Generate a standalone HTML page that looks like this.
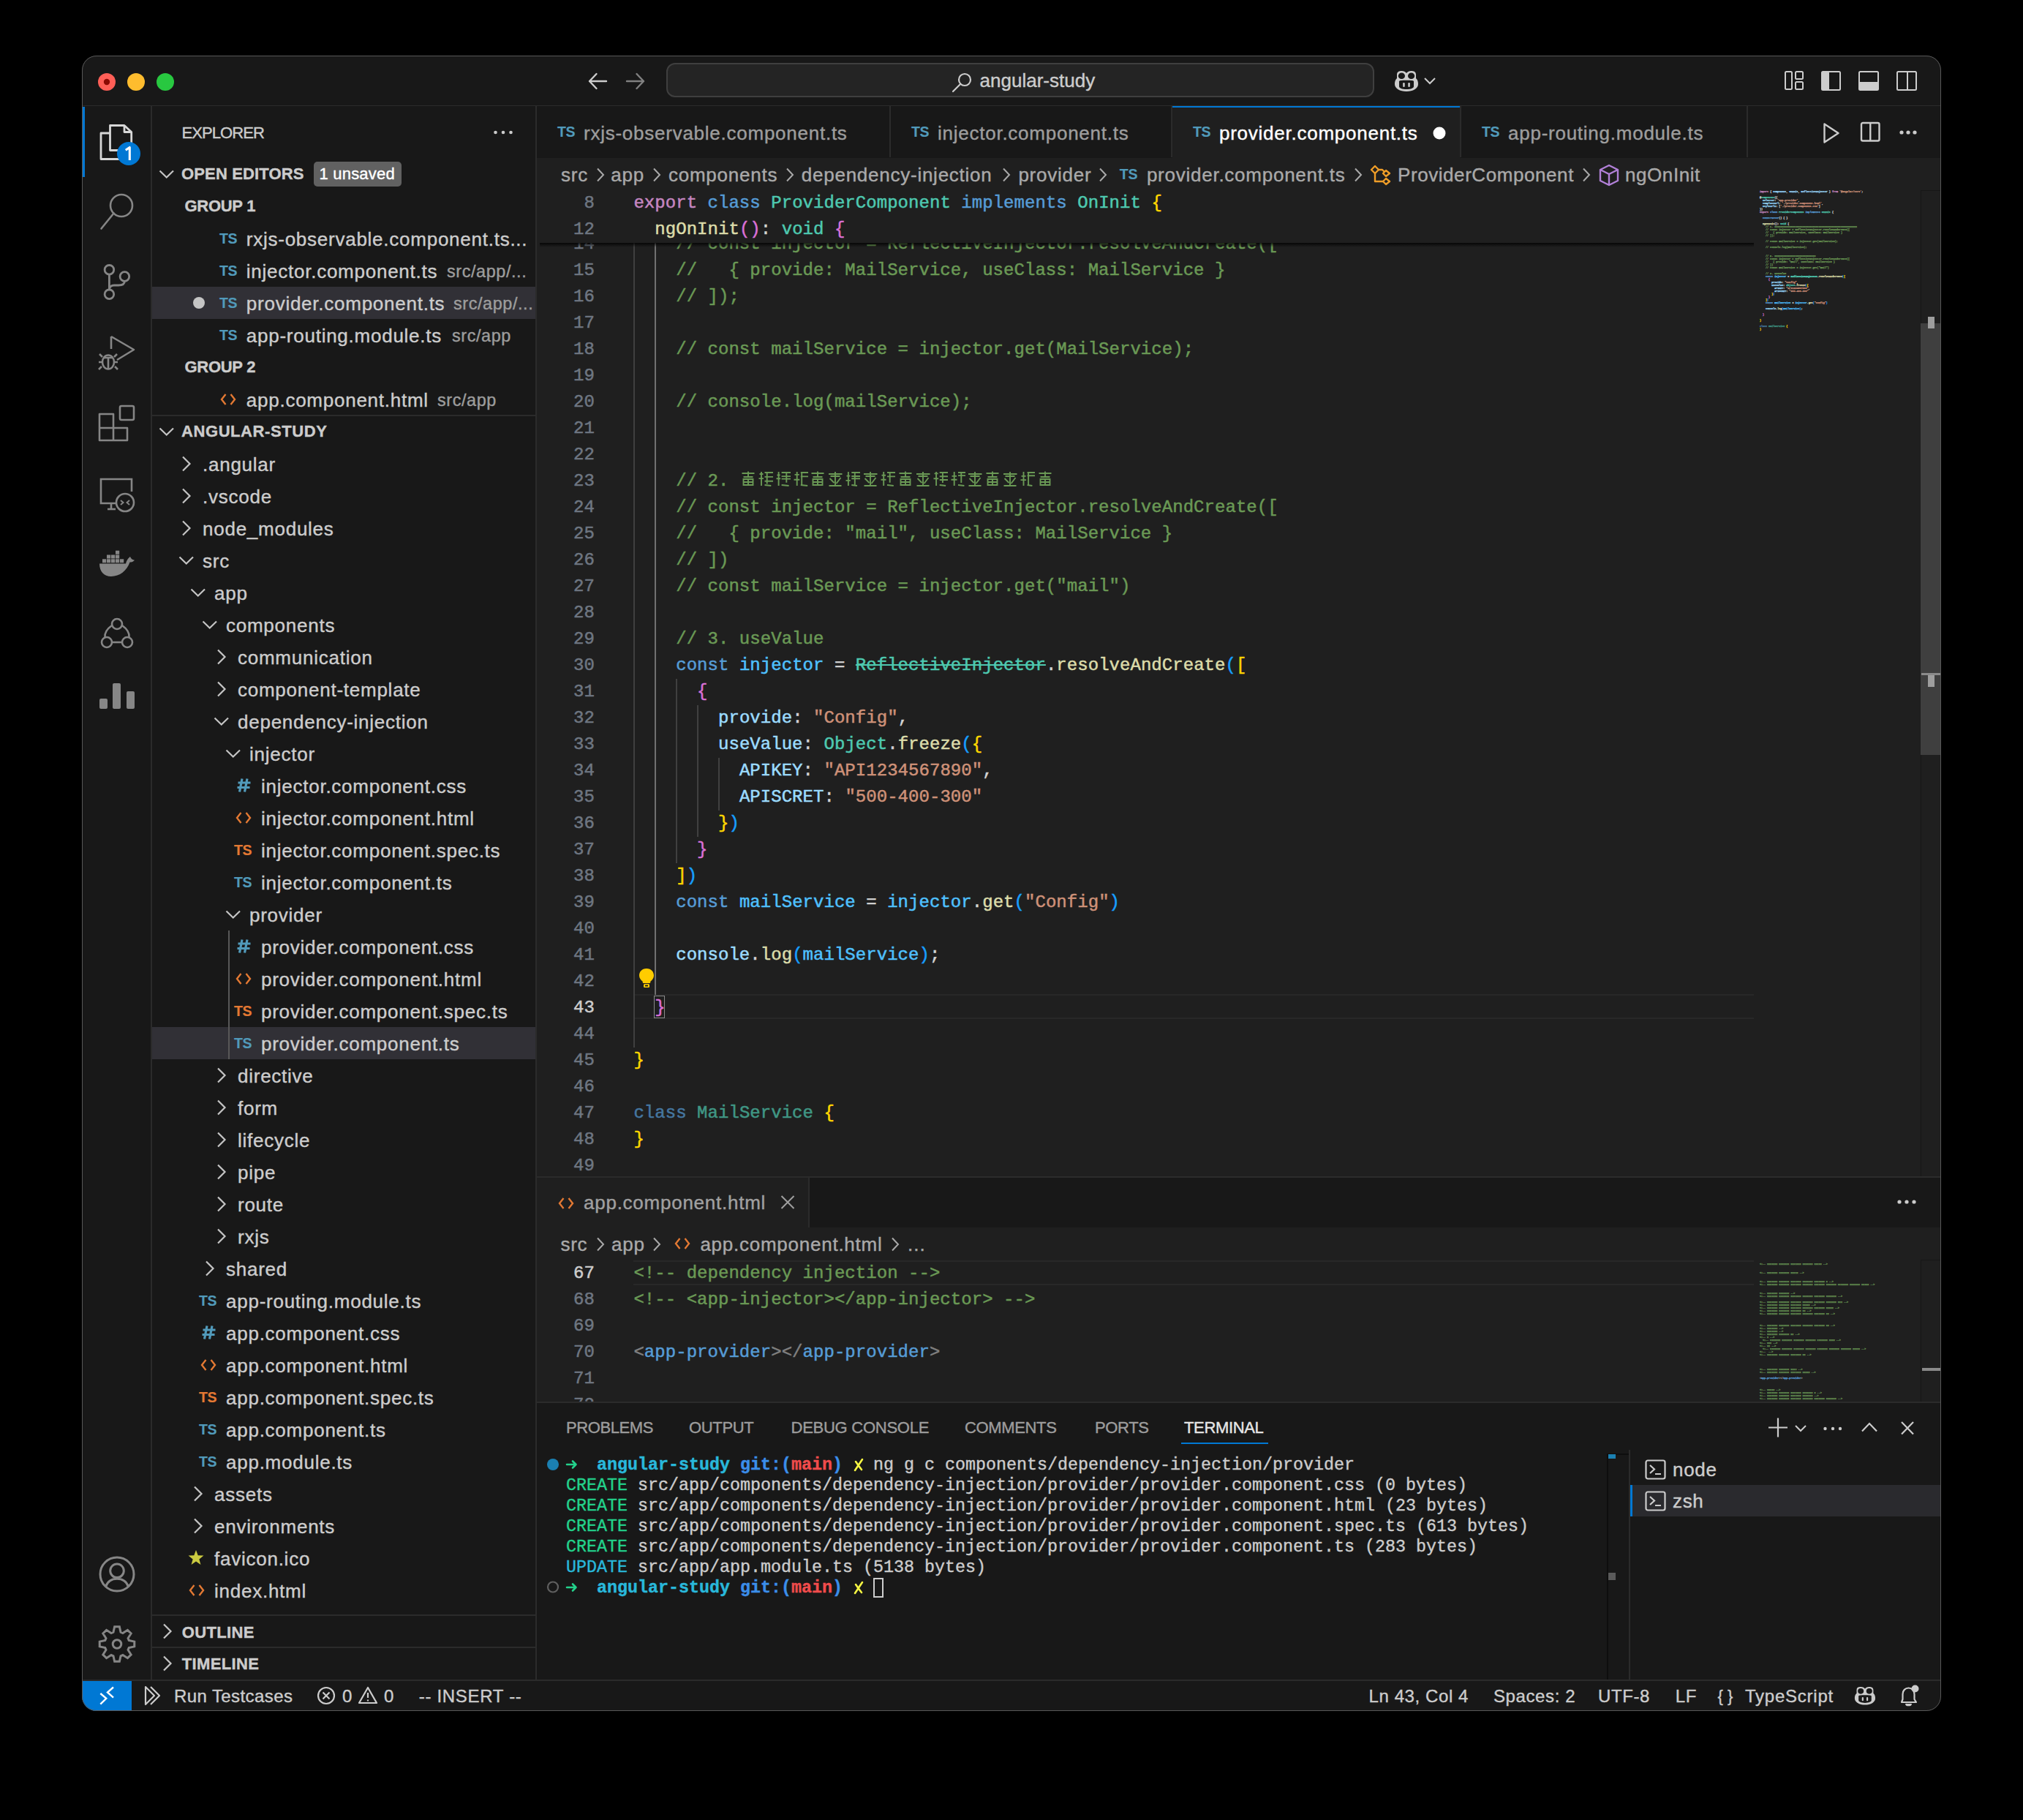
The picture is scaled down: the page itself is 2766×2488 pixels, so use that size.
<!DOCTYPE html><html><head><meta charset="utf-8"><style>
html,body{margin:0;padding:0;background:#000;width:2766px;height:2488px;overflow:hidden;}
.t{position:absolute;white-space:pre;-webkit-text-stroke:0.4px currentColor;}
.r{position:absolute;}
.s{position:absolute;overflow:visible;}
#win{position:absolute;left:112px;top:76px;width:2542px;height:2263px;border-radius:20px;overflow:hidden;background:#181818;}
#inner{position:absolute;left:-112px;top:-76px;width:2766px;height:2488px;}
#frame{position:absolute;left:112px;top:76px;width:2540px;height:2261px;border:1px solid #585858;border-radius:20px;pointer-events:none;}
.code{font-family:"Liberation Mono", monospace;font-size:24px;line-height:36px;-webkit-text-stroke:0.5px currentColor;letter-spacing:0.045px;}
</style></head><body>
<div id="win"><div id="inner">

<div class="r" style="left:112px;top:76px;width:2542px;height:69px;background:#181818;"></div>
<div class="r" style="left:112px;top:144px;width:2542px;height:2px;background:#2b2b2b;"></div>
<svg class="s" style="left:130px;top:96px;" width="112" height="32" viewBox="0 0 112 32"><circle cx="16" cy="16" r="12" fill="#ff5f57"/><circle cx="16" cy="16" r="4.2" fill="#8c0a04"/><circle cx="56" cy="16" r="12" fill="#febc2e"/><circle cx="96" cy="16" r="12" fill="#28c840"/></svg>
<svg class="s" style="left:800px;top:96px;" width="90" height="30" viewBox="0 0 90 30"><path d="M29 15 H6 M15.5 5 L6 15 L15.5 25" stroke="#cccccc" stroke-width="2.4" fill="none" stroke-linecap="round" stroke-linejoin="round"/><path d="M57 15 H80 M70.5 5 L80 15 L70.5 25" stroke="#808080" stroke-width="2.4" fill="none" stroke-linecap="round" stroke-linejoin="round"/></svg>
<div class="r" style="left:911px;top:86px;width:968px;height:47px;background:#242424;border:2px solid #3f3f3f;box-sizing:border-box;border-radius:12px;"></div>
<svg class="s" style="left:1300px;top:98px;" width="32" height="32" viewBox="0 0 32 32"><circle cx="19" cy="11" r="8" stroke="#cccccc" stroke-width="2.2" fill="none"/><path d="M13.3 16.7 L3 27" stroke="#cccccc" stroke-width="2.2" stroke-linecap="round"/></svg>
<div class="t" style="left:1339.6px;top:97.0px;font-size:26px;line-height:26px;color:#cccccc;font-family:'Liberation Sans', sans-serif;font-weight:normal;letter-spacing:0px;">angular-study</div>
<svg class="s" style="left:1906px;top:95.5px;" width="36" height="32" viewBox="0 0 36 32"><g transform="scale(1.0)"><path d="M4 6 C4 2 7 1 10.5 1 C14 1 16 2.5 17 4 C18 2.5 20 1 23.5 1 C27 1 30 2 30 6 L30 11 C32.5 13 33 16 33 19 C33 25 26 29 17 29 C8 29 1 25 1 19 C1 16 1.5 13 4 11 Z" fill="#cccccc"/><ellipse cx="10.4" cy="7.8" rx="4.6" ry="4.3" fill="#181818"/><ellipse cx="23.6" cy="7.8" rx="4.6" ry="4.3" fill="#181818"/><path d="M7 15.5 C7 14 10 13.8 17 13.8 C24 13.8 27 14 27 15.5 L27 22 C27 24.5 23 26 17 26 C11 26 7 24.5 7 22 Z" fill="#181818"/><rect x="12.2" y="17" width="2.5" height="6" rx="1.25" fill="#cccccc"/><rect x="19.3" y="17" width="2.5" height="6" rx="1.25" fill="#cccccc"/></g></svg>
<svg class="s" style="left:1946px;top:104px;" width="20" height="14" viewBox="0 0 20 14"><path d="M2 3 L9 10 L16 3" stroke="#cccccc" stroke-width="2" fill="none"/></svg>
<svg class="s" style="left:2438px;top:95px;" width="190" height="32" viewBox="0 0 190 32"><g stroke="#cccccc" stroke-width="2" fill="none"><rect x="3" y="3" width="9" height="24" rx="1.5"/><rect x="17" y="3" width="10" height="10" rx="1.5"/><rect x="17" y="17" width="10" height="10" rx="1.5"/><rect x="53" y="3" width="25" height="25" rx="1.5"/><rect x="104" y="3" width="26" height="25" rx="1.5"/><rect x="156" y="3" width="26" height="25" rx="1.5"/></g><rect x="53" y="3" width="10" height="25" fill="#cccccc"/><rect x="104" y="17" width="26" height="11" fill="#cccccc"/><path d="M170 3 V28" stroke="#cccccc" stroke-width="2"/></svg>
<div class="r" style="left:112px;top:145px;width:95px;height:2152px;background:#181818;"></div>
<div class="r" style="left:206px;top:145px;width:2px;height:2152px;background:#2b2b2b;"></div>
<div class="r" style="left:112px;top:146px;width:4px;height:96px;background:#0078d4;"></div>
<svg class="s" style="left:130px;top:164px;" width="60" height="64" viewBox="0 0 60 64"><g stroke="#d7d7d7" stroke-width="2.8" fill="none" stroke-linejoin="round"><path d="M20.5 7.5 H40 L49.7 16.5 V41.5 H20.5 Z"/><path d="M40 7.5 V16.5 H49.7"/><path d="M20.5 18 H8 V53.5 H33"/></g><circle cx="46" cy="46" r="16" fill="#0078d4"/><path d="M41.8 41.2 L47.3 37.5 V55" stroke="#ffffff" stroke-width="3.1" fill="none" stroke-linejoin="round"/></svg>
<svg class="s" style="left:134px;top:262px;" width="54" height="54" viewBox="0 0 54 54"><circle cx="32" cy="19" r="15" stroke="#868686" stroke-width="2.6" fill="none"/><path d="M21.5 29.5 L4.5 50.5" stroke="#868686" stroke-width="2.6" stroke-linecap="round"/></svg>
<svg class="s" style="left:134px;top:360px;" width="54" height="54" viewBox="0 0 54 54"><g stroke="#868686" stroke-width="2.8" fill="none"><circle cx="15.4" cy="8.8" r="6.3"/><circle cx="15.4" cy="42.3" r="6.3"/><circle cx="36.4" cy="18" r="6.3"/><path d="M15.4 15.1 V36"/><path d="M15.4 35.5 C16 31.5 18 30 22 30 H28 C33 30 36.4 28 36.4 24.3"/></g></svg>
<svg class="s" style="left:132px;top:455px;" width="56" height="56" viewBox="0 0 56 56"><g stroke="#868686" stroke-width="2.6" fill="none" stroke-linejoin="round"><path d="M20 5 L51 23 L28 37"/><path d="M20 5 V22"/><ellipse cx="16" cy="40" rx="8" ry="9.5"/><path d="M9.5 34 H22.5 M8 40 H3 M29 40 H24 M7 46 L3 50 M25 46 L29 50 M8 33 L4 29 M24 33 L28 29 M16 34 V49"/></g></svg>
<svg class="s" style="left:132px;top:552px;" width="56" height="56" viewBox="0 0 56 56"><g stroke="#868686" stroke-width="2.6" fill="none" stroke-linejoin="round"><rect x="32" y="3" width="19" height="19" rx="2"/><path d="M4 14 H23 V33 H42 V50 H4 Z"/><path d="M4 33 H23 V50"/></g></svg>
<svg class="s" style="left:132px;top:650px;" width="56" height="56" viewBox="0 0 56 56"><g stroke="#868686" stroke-width="2.6" fill="none"><path d="M26 38 H6 V5 H48 V22"/><path d="M15 46 H26"/><path d="M20 38 V46"/><circle cx="39" cy="37" r="12"/></g><path d="M33 34 L36.5 37 L33 40 M45 34 L41.5 37 L45 40" stroke="#868686" stroke-width="2" fill="none"/></svg>
<svg class="s" style="left:130px;top:745px;" width="60" height="50" viewBox="0 0 60 50"><g fill="#868686"><path d="M6 25.5 H42 C43 21 45.5 18 48 16 C49.5 19 50.5 20 54 20.8 C52.5 22.8 50 23.6 47.5 23.6 C43.5 35.5 33.5 43 22 43 C12 43 6 36 6 25.5 Z"/><rect x="10" y="19.3" width="5.2" height="5"/><rect x="16" y="19.3" width="5.2" height="5"/><rect x="22" y="19.3" width="5.2" height="5"/><rect x="28" y="19.3" width="5.2" height="5"/><rect x="34" y="19.3" width="5.2" height="5"/><rect x="16" y="13.5" width="5.2" height="5"/><rect x="22" y="13.5" width="5.2" height="5"/><rect x="28" y="13.5" width="5.2" height="5"/><rect x="28" y="7.7" width="5.2" height="5"/></g></svg>
<svg class="s" style="left:132px;top:838px;" width="56" height="56" viewBox="0 0 56 56"><g stroke="#868686" stroke-width="2.6" fill="none"><circle cx="28" cy="15" r="7"/><circle cx="14" cy="40" r="7"/><circle cx="42" cy="40" r="7"/><path d="M21 40 H35"/><path d="M21 17 C14 22 11 28 11.5 33"/><path d="M35 17 C42 22 45 28 44.5 33"/></g></svg>
<svg class="s" style="left:132px;top:930px;" width="56" height="42" viewBox="0 0 56 42"><g fill="#868686"><rect x="4" y="25" width="11" height="14" rx="2"/><rect x="22" y="4" width="11" height="35" rx="2"/><rect x="41" y="15" width="11" height="24" rx="2"/></g></svg>
<svg class="s" style="left:132px;top:2125px;" width="56" height="56" viewBox="0 0 56 56"><g stroke="#868686" stroke-width="3" fill="none"><circle cx="28" cy="27" r="23"/><circle cx="28" cy="22.3" r="9.3"/><path d="M12.5 44 C15 37 21 33.2 28 33.2 C35 33.2 41 37 43.5 44"/></g></svg>
<svg class="s" style="left:132px;top:2220px;" width="56" height="56" viewBox="0 0 56 56"><polygon points="22.98,11.26 24.65,3.73 31.35,3.73 33.02,11.26 35.93,12.46 42.44,8.33 47.17,13.06 43.04,19.57 44.24,22.48 51.77,24.15 51.77,30.85 44.24,32.52 43.04,35.43 47.17,41.94 42.44,46.67 35.93,42.54 33.02,43.74 31.35,51.27 24.65,51.27 22.98,43.74 20.07,42.54 13.56,46.67 8.83,41.94 12.96,35.43 11.76,32.52 4.23,30.85 4.23,24.15 11.76,22.48 12.96,19.57 8.83,13.06 13.56,8.33 20.07,12.46" stroke="#868686" stroke-width="3" fill="none" stroke-linejoin="miter"/><circle cx="28" cy="27.5" r="5.8" stroke="#868686" stroke-width="3" fill="none"/></svg>
<div class="r" style="left:208px;top:145px;width:524px;height:2152px;background:#181818;"></div>
<div class="r" style="left:732px;top:145px;width:2px;height:2152px;background:#2b2b2b;"></div>
<div class="t" style="left:248.4px;top:170.8px;font-size:22px;line-height:22px;color:#cccccc;font-family:'Liberation Sans', sans-serif;font-weight:normal;letter-spacing:-0.9px;">EXPLORER</div>
<svg class="s" style="left:674px;top:177px;" width="30" height="8" viewBox="0 0 30 8"><circle cx="3.5" cy="4" r="2.3" fill="#cccccc"/><circle cx="14" cy="4" r="2.3" fill="#cccccc"/><circle cx="24.5" cy="4" r="2.3" fill="#cccccc"/></svg>
<svg class="s" style="left:217px;top:231px;" width="22" height="14" viewBox="0 0 22 14"><path d="M1.5 2.5 L10.75 11.5 L20 2.5" stroke="#c5c5c5" stroke-width="2.2" fill="none"/></svg>
<div class="t" style="left:248.0px;top:227.1px;font-size:22px;line-height:22px;color:#cccccc;font-family:'Liberation Sans', sans-serif;font-weight:bold;letter-spacing:0.15px;">OPEN EDITORS</div>
<div class="r" style="left:429px;top:221px;width:120px;height:34px;background:#616161;border-radius:5px;"></div>
<div class="t" style="left:436.5px;top:226.9px;font-size:22px;line-height:22px;color:#ffffff;font-family:'Liberation Sans', sans-serif;font-weight:normal;letter-spacing:0.21px;">1 unsaved</div>
<div class="t" style="left:252.5px;top:271.4px;font-size:22px;line-height:22px;color:#cccccc;font-family:'Liberation Sans', sans-serif;font-weight:bold;letter-spacing:-0.29px;">GROUP 1</div>
<div class="r" style="left:208px;top:392px;width:524px;height:44px;background:#313036;"></div>
<svg class="s" style="left:262px;top:404px;" width="20" height="20" viewBox="0 0 20 20"><circle cx="10" cy="10" r="8" fill="#c5c5c5"/></svg>
<div class="t" style="left:300.0px;top:316.5px;font-size:19.5px;line-height:19.5px;color:#519aba;font-family:'Liberation Sans', sans-serif;font-weight:bold;letter-spacing:-0.3px;-webkit-text-stroke:0.15px currentColor;">TS</div>
<div class="t" style="left:336.8px;top:314.0px;font-size:26px;line-height:26px;color:#cccccc;font-family:'Liberation Sans', sans-serif;font-weight:normal;letter-spacing:0.75px;">rxjs-observable.component.ts...</div>
<div class="t" style="left:300.0px;top:360.5px;font-size:19.5px;line-height:19.5px;color:#519aba;font-family:'Liberation Sans', sans-serif;font-weight:bold;letter-spacing:-0.3px;-webkit-text-stroke:0.15px currentColor;">TS</div>
<div class="t" style="left:336.8px;top:358.0px;font-size:26px;line-height:26px;color:#cccccc;font-family:'Liberation Sans', sans-serif;font-weight:normal;letter-spacing:0.75px;">injector.component.ts</div>
<div class="t" style="left:611.0px;top:360.2px;font-size:23.4px;line-height:23.4px;color:#9d9d9d;font-family:'Liberation Sans', sans-serif;font-weight:normal;letter-spacing:0.6px;">src/app/...</div>
<div class="t" style="left:300.0px;top:404.5px;font-size:19.5px;line-height:19.5px;color:#519aba;font-family:'Liberation Sans', sans-serif;font-weight:bold;letter-spacing:-0.3px;-webkit-text-stroke:0.15px currentColor;">TS</div>
<div class="t" style="left:336.8px;top:402.0px;font-size:26px;line-height:26px;color:#cccccc;font-family:'Liberation Sans', sans-serif;font-weight:normal;letter-spacing:0.75px;">provider.component.ts</div>
<div class="t" style="left:620.0px;top:404.2px;font-size:23.4px;line-height:23.4px;color:#9d9d9d;font-family:'Liberation Sans', sans-serif;font-weight:normal;letter-spacing:0.6px;">src/app/...</div>
<div class="t" style="left:300.0px;top:448.5px;font-size:19.5px;line-height:19.5px;color:#519aba;font-family:'Liberation Sans', sans-serif;font-weight:bold;letter-spacing:-0.3px;-webkit-text-stroke:0.15px currentColor;">TS</div>
<div class="t" style="left:336.8px;top:446.0px;font-size:26px;line-height:26px;color:#cccccc;font-family:'Liberation Sans', sans-serif;font-weight:normal;letter-spacing:0.75px;">app-routing.module.ts</div>
<div class="t" style="left:618.0px;top:448.2px;font-size:23.4px;line-height:23.4px;color:#9d9d9d;font-family:'Liberation Sans', sans-serif;font-weight:normal;letter-spacing:0.6px;">src/app</div>
<div class="t" style="left:252.5px;top:491.4px;font-size:22px;line-height:22px;color:#cccccc;font-family:'Liberation Sans', sans-serif;font-weight:bold;letter-spacing:-0.29px;">GROUP 2</div>
<svg class="s" style="left:301px;top:536px;" width="22" height="20" viewBox="0 0 22 20"><path d="M7.5 3 L2 10 L7.5 17 M14.5 3 L20 10 L14.5 17" stroke="#e37933" stroke-width="2.4" fill="none"/></svg>
<div class="t" style="left:336.8px;top:534.0px;font-size:26px;line-height:26px;color:#cccccc;font-family:'Liberation Sans', sans-serif;font-weight:normal;letter-spacing:0.75px;">app.component.html</div>
<div class="t" style="left:598.0px;top:536.2px;font-size:23.4px;line-height:23.4px;color:#9d9d9d;font-family:'Liberation Sans', sans-serif;font-weight:normal;letter-spacing:0.6px;">src/app</div>
<div class="r" style="left:208px;top:567px;width:524px;height:2px;background:#2b2b2b;"></div>
<svg class="s" style="left:217px;top:583px;" width="22" height="14" viewBox="0 0 22 14"><path d="M1.5 2.5 L10.75 11.5 L20 2.5" stroke="#c5c5c5" stroke-width="2.2" fill="none"/></svg>
<div class="t" style="left:248.0px;top:579.1px;font-size:22px;line-height:22px;color:#cccccc;font-family:'Liberation Sans', sans-serif;font-weight:bold;letter-spacing:0.58px;">ANGULAR-STUDY</div>
<svg class="s" style="left:248px;top:623px;" width="14" height="22" viewBox="0 0 14 22"><path d="M2 1.5 L11.5 11 L2 20.5" stroke="#c5c5c5" stroke-width="2.2" fill="none"/></svg>
<div class="t" style="left:277.0px;top:622.0px;font-size:26px;line-height:26px;color:#cccccc;font-family:'Liberation Sans', sans-serif;font-weight:normal;letter-spacing:0.75px;">.angular</div>
<svg class="s" style="left:248px;top:667px;" width="14" height="22" viewBox="0 0 14 22"><path d="M2 1.5 L11.5 11 L2 20.5" stroke="#c5c5c5" stroke-width="2.2" fill="none"/></svg>
<div class="t" style="left:277.0px;top:666.0px;font-size:26px;line-height:26px;color:#cccccc;font-family:'Liberation Sans', sans-serif;font-weight:normal;letter-spacing:0.75px;">.vscode</div>
<svg class="s" style="left:248px;top:711px;" width="14" height="22" viewBox="0 0 14 22"><path d="M2 1.5 L11.5 11 L2 20.5" stroke="#c5c5c5" stroke-width="2.2" fill="none"/></svg>
<div class="t" style="left:277.0px;top:710.0px;font-size:26px;line-height:26px;color:#cccccc;font-family:'Liberation Sans', sans-serif;font-weight:normal;letter-spacing:0.75px;">node_modules</div>
<svg class="s" style="left:244px;top:759px;" width="22" height="14" viewBox="0 0 22 14"><path d="M1.5 2.5 L10.75 11.5 L20 2.5" stroke="#c5c5c5" stroke-width="2.2" fill="none"/></svg>
<div class="t" style="left:277.0px;top:754.0px;font-size:26px;line-height:26px;color:#cccccc;font-family:'Liberation Sans', sans-serif;font-weight:normal;letter-spacing:0.75px;">src</div>
<svg class="s" style="left:260px;top:803px;" width="22" height="14" viewBox="0 0 22 14"><path d="M1.5 2.5 L10.75 11.5 L20 2.5" stroke="#c5c5c5" stroke-width="2.2" fill="none"/></svg>
<div class="t" style="left:293.0px;top:798.0px;font-size:26px;line-height:26px;color:#cccccc;font-family:'Liberation Sans', sans-serif;font-weight:normal;letter-spacing:0.75px;">app</div>
<svg class="s" style="left:276px;top:847px;" width="22" height="14" viewBox="0 0 22 14"><path d="M1.5 2.5 L10.75 11.5 L20 2.5" stroke="#c5c5c5" stroke-width="2.2" fill="none"/></svg>
<div class="t" style="left:309.0px;top:842.0px;font-size:26px;line-height:26px;color:#cccccc;font-family:'Liberation Sans', sans-serif;font-weight:normal;letter-spacing:0.75px;">components</div>
<svg class="s" style="left:296px;top:887px;" width="14" height="22" viewBox="0 0 14 22"><path d="M2 1.5 L11.5 11 L2 20.5" stroke="#c5c5c5" stroke-width="2.2" fill="none"/></svg>
<div class="t" style="left:325.0px;top:886.0px;font-size:26px;line-height:26px;color:#cccccc;font-family:'Liberation Sans', sans-serif;font-weight:normal;letter-spacing:0.75px;">communication</div>
<svg class="s" style="left:296px;top:931px;" width="14" height="22" viewBox="0 0 14 22"><path d="M2 1.5 L11.5 11 L2 20.5" stroke="#c5c5c5" stroke-width="2.2" fill="none"/></svg>
<div class="t" style="left:325.0px;top:930.0px;font-size:26px;line-height:26px;color:#cccccc;font-family:'Liberation Sans', sans-serif;font-weight:normal;letter-spacing:0.75px;">component-template</div>
<svg class="s" style="left:292px;top:979px;" width="22" height="14" viewBox="0 0 22 14"><path d="M1.5 2.5 L10.75 11.5 L20 2.5" stroke="#c5c5c5" stroke-width="2.2" fill="none"/></svg>
<div class="t" style="left:325.0px;top:974.0px;font-size:26px;line-height:26px;color:#cccccc;font-family:'Liberation Sans', sans-serif;font-weight:normal;letter-spacing:0.75px;">dependency-injection</div>
<svg class="s" style="left:308px;top:1023px;" width="22" height="14" viewBox="0 0 22 14"><path d="M1.5 2.5 L10.75 11.5 L20 2.5" stroke="#c5c5c5" stroke-width="2.2" fill="none"/></svg>
<div class="t" style="left:341.0px;top:1018.0px;font-size:26px;line-height:26px;color:#cccccc;font-family:'Liberation Sans', sans-serif;font-weight:normal;letter-spacing:0.75px;">injector</div>
<svg class="s" style="left:323px;top:1063px;" width="21" height="21" viewBox="0 0 21 21"><path d="M8 1.5 L4.5 19.5 M15 1.5 L11.5 19.5 M2.5 7 H19.5 M1.5 13.5 H18.5" stroke="#519aba" stroke-width="3.2" fill="none"/></svg>
<div class="t" style="left:357.0px;top:1062.0px;font-size:26px;line-height:26px;color:#cccccc;font-family:'Liberation Sans', sans-serif;font-weight:normal;letter-spacing:0.75px;">injector.component.css</div>
<svg class="s" style="left:322px;top:1108px;" width="22" height="20" viewBox="0 0 22 20"><path d="M7.5 3 L2 10 L7.5 17 M14.5 3 L20 10 L14.5 17" stroke="#e37933" stroke-width="2.4" fill="none"/></svg>
<div class="t" style="left:357.0px;top:1106.0px;font-size:26px;line-height:26px;color:#cccccc;font-family:'Liberation Sans', sans-serif;font-weight:normal;letter-spacing:0.75px;">injector.component.html</div>
<div class="t" style="left:320.0px;top:1152.5px;font-size:19.5px;line-height:19.5px;color:#e37933;font-family:'Liberation Sans', sans-serif;font-weight:bold;letter-spacing:-0.3px;-webkit-text-stroke:0.15px currentColor;">TS</div>
<div class="t" style="left:357.0px;top:1150.0px;font-size:26px;line-height:26px;color:#cccccc;font-family:'Liberation Sans', sans-serif;font-weight:normal;letter-spacing:0.75px;">injector.component.spec.ts</div>
<div class="t" style="left:320.0px;top:1196.5px;font-size:19.5px;line-height:19.5px;color:#519aba;font-family:'Liberation Sans', sans-serif;font-weight:bold;letter-spacing:-0.3px;-webkit-text-stroke:0.15px currentColor;">TS</div>
<div class="t" style="left:357.0px;top:1194.0px;font-size:26px;line-height:26px;color:#cccccc;font-family:'Liberation Sans', sans-serif;font-weight:normal;letter-spacing:0.75px;">injector.component.ts</div>
<svg class="s" style="left:308px;top:1243px;" width="22" height="14" viewBox="0 0 22 14"><path d="M1.5 2.5 L10.75 11.5 L20 2.5" stroke="#c5c5c5" stroke-width="2.2" fill="none"/></svg>
<div class="t" style="left:341.0px;top:1238.0px;font-size:26px;line-height:26px;color:#cccccc;font-family:'Liberation Sans', sans-serif;font-weight:normal;letter-spacing:0.75px;">provider</div>
<svg class="s" style="left:323px;top:1283px;" width="21" height="21" viewBox="0 0 21 21"><path d="M8 1.5 L4.5 19.5 M15 1.5 L11.5 19.5 M2.5 7 H19.5 M1.5 13.5 H18.5" stroke="#519aba" stroke-width="3.2" fill="none"/></svg>
<div class="t" style="left:357.0px;top:1282.0px;font-size:26px;line-height:26px;color:#cccccc;font-family:'Liberation Sans', sans-serif;font-weight:normal;letter-spacing:0.75px;">provider.component.css</div>
<svg class="s" style="left:322px;top:1328px;" width="22" height="20" viewBox="0 0 22 20"><path d="M7.5 3 L2 10 L7.5 17 M14.5 3 L20 10 L14.5 17" stroke="#e37933" stroke-width="2.4" fill="none"/></svg>
<div class="t" style="left:357.0px;top:1326.0px;font-size:26px;line-height:26px;color:#cccccc;font-family:'Liberation Sans', sans-serif;font-weight:normal;letter-spacing:0.75px;">provider.component.html</div>
<div class="t" style="left:320.0px;top:1372.5px;font-size:19.5px;line-height:19.5px;color:#e37933;font-family:'Liberation Sans', sans-serif;font-weight:bold;letter-spacing:-0.3px;-webkit-text-stroke:0.15px currentColor;">TS</div>
<div class="t" style="left:357.0px;top:1370.0px;font-size:26px;line-height:26px;color:#cccccc;font-family:'Liberation Sans', sans-serif;font-weight:normal;letter-spacing:0.75px;">provider.component.spec.ts</div>
<div class="r" style="left:208px;top:1404px;width:524px;height:44px;background:#313036;"></div>
<div class="t" style="left:320.0px;top:1416.5px;font-size:19.5px;line-height:19.5px;color:#519aba;font-family:'Liberation Sans', sans-serif;font-weight:bold;letter-spacing:-0.3px;-webkit-text-stroke:0.15px currentColor;">TS</div>
<div class="t" style="left:357.0px;top:1414.0px;font-size:26px;line-height:26px;color:#cccccc;font-family:'Liberation Sans', sans-serif;font-weight:normal;letter-spacing:0.75px;">provider.component.ts</div>
<svg class="s" style="left:296px;top:1459px;" width="14" height="22" viewBox="0 0 14 22"><path d="M2 1.5 L11.5 11 L2 20.5" stroke="#c5c5c5" stroke-width="2.2" fill="none"/></svg>
<div class="t" style="left:325.0px;top:1458.0px;font-size:26px;line-height:26px;color:#cccccc;font-family:'Liberation Sans', sans-serif;font-weight:normal;letter-spacing:0.75px;">directive</div>
<svg class="s" style="left:296px;top:1503px;" width="14" height="22" viewBox="0 0 14 22"><path d="M2 1.5 L11.5 11 L2 20.5" stroke="#c5c5c5" stroke-width="2.2" fill="none"/></svg>
<div class="t" style="left:325.0px;top:1502.0px;font-size:26px;line-height:26px;color:#cccccc;font-family:'Liberation Sans', sans-serif;font-weight:normal;letter-spacing:0.75px;">form</div>
<svg class="s" style="left:296px;top:1547px;" width="14" height="22" viewBox="0 0 14 22"><path d="M2 1.5 L11.5 11 L2 20.5" stroke="#c5c5c5" stroke-width="2.2" fill="none"/></svg>
<div class="t" style="left:325.0px;top:1546.0px;font-size:26px;line-height:26px;color:#cccccc;font-family:'Liberation Sans', sans-serif;font-weight:normal;letter-spacing:0.75px;">lifecycle</div>
<svg class="s" style="left:296px;top:1591px;" width="14" height="22" viewBox="0 0 14 22"><path d="M2 1.5 L11.5 11 L2 20.5" stroke="#c5c5c5" stroke-width="2.2" fill="none"/></svg>
<div class="t" style="left:325.0px;top:1590.0px;font-size:26px;line-height:26px;color:#cccccc;font-family:'Liberation Sans', sans-serif;font-weight:normal;letter-spacing:0.75px;">pipe</div>
<svg class="s" style="left:296px;top:1635px;" width="14" height="22" viewBox="0 0 14 22"><path d="M2 1.5 L11.5 11 L2 20.5" stroke="#c5c5c5" stroke-width="2.2" fill="none"/></svg>
<div class="t" style="left:325.0px;top:1634.0px;font-size:26px;line-height:26px;color:#cccccc;font-family:'Liberation Sans', sans-serif;font-weight:normal;letter-spacing:0.75px;">route</div>
<svg class="s" style="left:296px;top:1679px;" width="14" height="22" viewBox="0 0 14 22"><path d="M2 1.5 L11.5 11 L2 20.5" stroke="#c5c5c5" stroke-width="2.2" fill="none"/></svg>
<div class="t" style="left:325.0px;top:1678.0px;font-size:26px;line-height:26px;color:#cccccc;font-family:'Liberation Sans', sans-serif;font-weight:normal;letter-spacing:0.75px;">rxjs</div>
<svg class="s" style="left:280px;top:1723px;" width="14" height="22" viewBox="0 0 14 22"><path d="M2 1.5 L11.5 11 L2 20.5" stroke="#c5c5c5" stroke-width="2.2" fill="none"/></svg>
<div class="t" style="left:309.0px;top:1722.0px;font-size:26px;line-height:26px;color:#cccccc;font-family:'Liberation Sans', sans-serif;font-weight:normal;letter-spacing:0.75px;">shared</div>
<div class="t" style="left:272.0px;top:1768.5px;font-size:19.5px;line-height:19.5px;color:#519aba;font-family:'Liberation Sans', sans-serif;font-weight:bold;letter-spacing:-0.3px;-webkit-text-stroke:0.15px currentColor;">TS</div>
<div class="t" style="left:309.0px;top:1766.0px;font-size:26px;line-height:26px;color:#cccccc;font-family:'Liberation Sans', sans-serif;font-weight:normal;letter-spacing:0.75px;">app-routing.module.ts</div>
<svg class="s" style="left:275px;top:1811px;" width="21" height="21" viewBox="0 0 21 21"><path d="M8 1.5 L4.5 19.5 M15 1.5 L11.5 19.5 M2.5 7 H19.5 M1.5 13.5 H18.5" stroke="#519aba" stroke-width="3.2" fill="none"/></svg>
<div class="t" style="left:309.0px;top:1810.0px;font-size:26px;line-height:26px;color:#cccccc;font-family:'Liberation Sans', sans-serif;font-weight:normal;letter-spacing:0.75px;">app.component.css</div>
<svg class="s" style="left:274px;top:1856px;" width="22" height="20" viewBox="0 0 22 20"><path d="M7.5 3 L2 10 L7.5 17 M14.5 3 L20 10 L14.5 17" stroke="#e37933" stroke-width="2.4" fill="none"/></svg>
<div class="t" style="left:309.0px;top:1854.0px;font-size:26px;line-height:26px;color:#cccccc;font-family:'Liberation Sans', sans-serif;font-weight:normal;letter-spacing:0.75px;">app.component.html</div>
<div class="t" style="left:272.0px;top:1900.5px;font-size:19.5px;line-height:19.5px;color:#e37933;font-family:'Liberation Sans', sans-serif;font-weight:bold;letter-spacing:-0.3px;-webkit-text-stroke:0.15px currentColor;">TS</div>
<div class="t" style="left:309.0px;top:1898.0px;font-size:26px;line-height:26px;color:#cccccc;font-family:'Liberation Sans', sans-serif;font-weight:normal;letter-spacing:0.75px;">app.component.spec.ts</div>
<div class="t" style="left:272.0px;top:1944.5px;font-size:19.5px;line-height:19.5px;color:#519aba;font-family:'Liberation Sans', sans-serif;font-weight:bold;letter-spacing:-0.3px;-webkit-text-stroke:0.15px currentColor;">TS</div>
<div class="t" style="left:309.0px;top:1942.0px;font-size:26px;line-height:26px;color:#cccccc;font-family:'Liberation Sans', sans-serif;font-weight:normal;letter-spacing:0.75px;">app.component.ts</div>
<div class="t" style="left:272.0px;top:1988.5px;font-size:19.5px;line-height:19.5px;color:#519aba;font-family:'Liberation Sans', sans-serif;font-weight:bold;letter-spacing:-0.3px;-webkit-text-stroke:0.15px currentColor;">TS</div>
<div class="t" style="left:309.0px;top:1986.0px;font-size:26px;line-height:26px;color:#cccccc;font-family:'Liberation Sans', sans-serif;font-weight:normal;letter-spacing:0.75px;">app.module.ts</div>
<svg class="s" style="left:264px;top:2031px;" width="14" height="22" viewBox="0 0 14 22"><path d="M2 1.5 L11.5 11 L2 20.5" stroke="#c5c5c5" stroke-width="2.2" fill="none"/></svg>
<div class="t" style="left:293.0px;top:2030.0px;font-size:26px;line-height:26px;color:#cccccc;font-family:'Liberation Sans', sans-serif;font-weight:normal;letter-spacing:0.75px;">assets</div>
<svg class="s" style="left:264px;top:2075px;" width="14" height="22" viewBox="0 0 14 22"><path d="M2 1.5 L11.5 11 L2 20.5" stroke="#c5c5c5" stroke-width="2.2" fill="none"/></svg>
<div class="t" style="left:293.0px;top:2074.0px;font-size:26px;line-height:26px;color:#cccccc;font-family:'Liberation Sans', sans-serif;font-weight:normal;letter-spacing:0.75px;">environments</div>
<svg class="s" style="left:256px;top:2118px;" width="24" height="24" viewBox="0 0 24 24"><polygon points="12.00,1.00 14.70,8.28 22.46,8.60 16.37,13.42 18.47,20.90 12.00,16.60 5.53,20.90 7.63,13.42 1.54,8.60 9.30,8.28" fill="#cbcb41"/></svg>
<div class="t" style="left:293.0px;top:2118.0px;font-size:26px;line-height:26px;color:#cccccc;font-family:'Liberation Sans', sans-serif;font-weight:normal;letter-spacing:0.75px;">favicon.ico</div>
<svg class="s" style="left:258px;top:2164px;" width="22" height="20" viewBox="0 0 22 20"><path d="M7.5 3 L2 10 L7.5 17 M14.5 3 L20 10 L14.5 17" stroke="#e37933" stroke-width="2.4" fill="none"/></svg>
<div class="t" style="left:293.0px;top:2162.0px;font-size:26px;line-height:26px;color:#cccccc;font-family:'Liberation Sans', sans-serif;font-weight:normal;letter-spacing:0.75px;">index.html</div>
<div class="r" style="left:312px;top:1272px;width:2px;height:176px;background:#585858;"></div>
<div class="r" style="left:208px;top:2207px;width:524px;height:2px;background:#2b2b2b;"></div>
<svg class="s" style="left:222px;top:2219px;" width="14" height="22" viewBox="0 0 14 22"><path d="M2 1.5 L11.5 11 L2 20.5" stroke="#c5c5c5" stroke-width="2.2" fill="none"/></svg>
<div class="t" style="left:248.8px;top:2221.0px;font-size:22px;line-height:22px;color:#cccccc;font-family:'Liberation Sans', sans-serif;font-weight:bold;letter-spacing:0.35px;">OUTLINE</div>
<div class="r" style="left:208px;top:2251px;width:524px;height:2px;background:#2b2b2b;"></div>
<svg class="s" style="left:222px;top:2263px;" width="14" height="22" viewBox="0 0 14 22"><path d="M2 1.5 L11.5 11 L2 20.5" stroke="#c5c5c5" stroke-width="2.2" fill="none"/></svg>
<div class="t" style="left:248.8px;top:2264.4px;font-size:22px;line-height:22px;color:#cccccc;font-family:'Liberation Sans', sans-serif;font-weight:bold;letter-spacing:0.35px;">TIMELINE</div>
<div class="r" style="left:734px;top:145px;width:1920px;height:1463px;background:#1f1f1f;"></div>
<div class="r" style="left:734px;top:145px;width:1920px;height:71px;background:#181818;"></div>
<div class="r" style="left:734px;top:145px;width:482px;height:69px;background:#181818;"></div>
<div class="r" style="left:1216px;top:145px;width:2px;height:70px;background:#2b2b2b;"></div>
<div class="t" style="left:762.0px;top:170.5px;font-size:19.5px;line-height:19.5px;color:#519aba;font-family:'Liberation Sans', sans-serif;font-weight:bold;letter-spacing:-0.3px;-webkit-text-stroke:0.15px currentColor;">TS</div>
<div class="t" style="left:798.0px;top:169.0px;font-size:26px;line-height:26px;color:#9d9d9d;font-family:'Liberation Sans', sans-serif;font-weight:normal;letter-spacing:0.75px;">rxjs-observable.component.ts</div>
<div class="r" style="left:1218px;top:145px;width:383px;height:69px;background:#181818;"></div>
<div class="r" style="left:1601px;top:145px;width:2px;height:70px;background:#2b2b2b;"></div>
<div class="t" style="left:1246.0px;top:170.5px;font-size:19.5px;line-height:19.5px;color:#519aba;font-family:'Liberation Sans', sans-serif;font-weight:bold;letter-spacing:-0.3px;-webkit-text-stroke:0.15px currentColor;">TS</div>
<div class="t" style="left:1282.0px;top:169.0px;font-size:26px;line-height:26px;color:#9d9d9d;font-family:'Liberation Sans', sans-serif;font-weight:normal;letter-spacing:0.75px;">injector.component.ts</div>
<div class="r" style="left:1603px;top:145px;width:393px;height:71px;background:#1f1f1f;"></div>
<div class="r" style="left:1996px;top:145px;width:2px;height:70px;background:#2b2b2b;"></div>
<div class="r" style="left:1603px;top:145px;width:393px;height:2px;background:#0078d4;"></div>
<div class="t" style="left:1631.0px;top:170.5px;font-size:19.5px;line-height:19.5px;color:#519aba;font-family:'Liberation Sans', sans-serif;font-weight:bold;letter-spacing:-0.3px;-webkit-text-stroke:0.15px currentColor;">TS</div>
<div class="t" style="left:1667.0px;top:169.0px;font-size:26px;line-height:26px;color:#ffffff;font-family:'Liberation Sans', sans-serif;font-weight:normal;letter-spacing:0.75px;">provider.component.ts</div>
<svg class="s" style="left:1957px;top:171px;" width="22" height="22" viewBox="0 0 22 22"><circle cx="11" cy="11" r="8.5" fill="#ffffff"/></svg>
<div class="r" style="left:1998px;top:145px;width:390px;height:69px;background:#181818;"></div>
<div class="r" style="left:2388px;top:145px;width:2px;height:70px;background:#2b2b2b;"></div>
<div class="t" style="left:2026.0px;top:170.5px;font-size:19.5px;line-height:19.5px;color:#519aba;font-family:'Liberation Sans', sans-serif;font-weight:bold;letter-spacing:-0.3px;-webkit-text-stroke:0.15px currentColor;">TS</div>
<div class="t" style="left:2062.0px;top:169.0px;font-size:26px;line-height:26px;color:#9d9d9d;font-family:'Liberation Sans', sans-serif;font-weight:normal;letter-spacing:0.75px;">app-routing.module.ts</div>
<svg class="s" style="left:2488px;top:164px;" width="140" height="36" viewBox="0 0 140 36"><path d="M6.5 5.5 L25.5 18 L6.5 30.5 Z" stroke="#cccccc" stroke-width="2.4" fill="none" stroke-linejoin="round"/><rect x="57" y="4" width="24.5" height="24.5" rx="2" stroke="#cccccc" stroke-width="2.4" fill="none"/><path d="M69.25 4 V28.5" stroke="#cccccc" stroke-width="2.4"/><circle cx="112" cy="17" r="2.6" fill="#cccccc"/><circle cx="121" cy="17" r="2.6" fill="#cccccc"/><circle cx="130" cy="17" r="2.6" fill="#cccccc"/></svg>
<div class="t" style="left:767.0px;top:225.8px;font-size:26px;line-height:26px;color:#a9a9a9;font-family:'Liberation Sans', sans-serif;font-weight:normal;letter-spacing:0.75px;">src</div>
<svg class="s" style="left:815px;top:229px;" width="12" height="20" viewBox="0 0 12 20"><path d="M2 1.5 L10 10 L2 18.5" stroke="#a9a9a9" stroke-width="2" fill="none"/></svg>
<div class="t" style="left:835.3px;top:225.8px;font-size:26px;line-height:26px;color:#a9a9a9;font-family:'Liberation Sans', sans-serif;font-weight:normal;letter-spacing:0.75px;">app</div>
<svg class="s" style="left:892px;top:229px;" width="12" height="20" viewBox="0 0 12 20"><path d="M2 1.5 L10 10 L2 18.5" stroke="#a9a9a9" stroke-width="2" fill="none"/></svg>
<div class="t" style="left:914.0px;top:225.8px;font-size:26px;line-height:26px;color:#a9a9a9;font-family:'Liberation Sans', sans-serif;font-weight:normal;letter-spacing:0.75px;">components</div>
<svg class="s" style="left:1074px;top:229px;" width="12" height="20" viewBox="0 0 12 20"><path d="M2 1.5 L10 10 L2 18.5" stroke="#a9a9a9" stroke-width="2" fill="none"/></svg>
<div class="t" style="left:1095.8px;top:225.8px;font-size:26px;line-height:26px;color:#a9a9a9;font-family:'Liberation Sans', sans-serif;font-weight:normal;letter-spacing:0.75px;">dependency-injection</div>
<svg class="s" style="left:1370px;top:229px;" width="12" height="20" viewBox="0 0 12 20"><path d="M2 1.5 L10 10 L2 18.5" stroke="#a9a9a9" stroke-width="2" fill="none"/></svg>
<div class="t" style="left:1392.4px;top:225.8px;font-size:26px;line-height:26px;color:#a9a9a9;font-family:'Liberation Sans', sans-serif;font-weight:normal;letter-spacing:0.75px;">provider</div>
<svg class="s" style="left:1502px;top:229px;" width="12" height="20" viewBox="0 0 12 20"><path d="M2 1.5 L10 10 L2 18.5" stroke="#a9a9a9" stroke-width="2" fill="none"/></svg>
<div class="t" style="left:1530.8px;top:228.5px;font-size:19.5px;line-height:19.5px;color:#519aba;font-family:'Liberation Sans', sans-serif;font-weight:bold;letter-spacing:-0.3px;-webkit-text-stroke:0.15px currentColor;">TS</div>
<div class="t" style="left:1567.9px;top:225.8px;font-size:26px;line-height:26px;color:#a9a9a9;font-family:'Liberation Sans', sans-serif;font-weight:normal;letter-spacing:0.75px;">provider.component.ts</div>
<svg class="s" style="left:1851px;top:229px;" width="12" height="20" viewBox="0 0 12 20"><path d="M2 1.5 L10 10 L2 18.5" stroke="#a9a9a9" stroke-width="2" fill="none"/></svg>
<svg class="s" style="left:1872px;top:225px;" width="32" height="30" viewBox="0 0 32 30"><g stroke="#ee9d28" stroke-width="2.4" fill="none" stroke-linejoin="round"><path d="M3 7 L8 2 L13 7 L8 12 Z"/><path d="M19 12 L23 8 L28 12 L23 16 Z"/><path d="M19 23 L23 19 L28 23 L23 27 Z"/><path d="M8 12 V23 H19 M13 7 H18 L21 10"/></g></svg>
<div class="t" style="left:1911.0px;top:225.8px;font-size:26px;line-height:26px;color:#a9a9a9;font-family:'Liberation Sans', sans-serif;font-weight:normal;letter-spacing:0.57px;">ProviderComponent</div>
<svg class="s" style="left:2163px;top:229px;" width="12" height="20" viewBox="0 0 12 20"><path d="M2 1.5 L10 10 L2 18.5" stroke="#a9a9a9" stroke-width="2" fill="none"/></svg>
<svg class="s" style="left:2186px;top:224px;" width="30" height="32" viewBox="0 0 30 32"><g stroke="#b180d7" stroke-width="2.4" fill="none" stroke-linejoin="round"><path d="M14 2 L26 8 V23 L14 29 L2 23 V8 Z"/><path d="M2 8 L14 14 L26 8 M14 14 V29"/></g></svg>
<div class="t" style="left:2222.0px;top:225.8px;font-size:26px;line-height:26px;color:#a9a9a9;font-family:'Liberation Sans', sans-serif;font-weight:normal;letter-spacing:0.57px;">ngOnInit</div>
<div class="r" style="left:866px;top:1359px;width:1532px;height:2px;background:#282828;"></div>
<div class="r" style="left:866px;top:1391px;width:1532px;height:2px;background:#282828;"></div>
<div class="r" style="left:866px;top:279.6px;width:2px;height:1152.0px;background:#404040;"></div>
<div class="r" style="left:895px;top:279.6px;width:2px;height:1080.0px;background:#707070;"></div>
<div class="r" style="left:924px;top:927.6px;width:2px;height:251.9999999999999px;background:#404040;"></div>
<div class="r" style="left:953px;top:963.6px;width:2px;height:179.9999999999999px;background:#404040;"></div>
<div class="r" style="left:982px;top:1035.6px;width:2px;height:72.0px;background:#404040;"></div>
<div class="t code" style="left:713px;width:100px;text-align:right;top:279.6px;color:#6e7681">13</div>
<div class="t code" style="left:866.4px;top:279.6px;color:#d4d4d4;"><span style="color:#6a9955;">    // 1. </span><svg style="display:inline-block;vertical-align:-3px;" width="23.9" height="24" viewBox="-0.5 0 23.9 24"><path d="M3 4 H20 M11.5 1.5 V9 M5 9 H18 M5 12 H18 V20 H5 Z M5 16 H18 M11.5 12 V20" stroke="#6a9955" stroke-width="1.9" fill="none"/></svg><svg style="display:inline-block;vertical-align:-3px;" width="23.9" height="24" viewBox="-0.5 0 23.9 24"><path d="M3 5.0 H8.0 M5.5 2 V21 M2 11.1 H8.5 M10.0 3.0 H21.5 M10.0 8.9 H21.5 M10.0 14.7 H21.5 M13.2 2 V18.4 M10.0 20 L18.8 21" stroke="#6a9955" stroke-width="1.9" fill="none"/></svg><svg style="display:inline-block;vertical-align:-3px;" width="23.9" height="24" viewBox="-0.5 0 23.9 24"><path d="M3 6.5 H7.1 M5.1 2 V21 M2 11.2 H7.6 M9.1 3.0 H21.5 M9.1 8.1 H21.5 M9.1 11.6 H21.5 M15.8 2 V16.8 M9.1 20 L19.1 21" stroke="#6a9955" stroke-width="1.9" fill="none"/></svg><svg style="display:inline-block;vertical-align:-3px;" width="23.9" height="24" viewBox="-0.5 0 23.9 24"><path d="M3 5.9 H9.3 M6.2 2 V21 M2 12.7 H9.8 M11.3 3.0 H21.5 M11.3 8.4 H21.5 M12.7 2 V19.3 M11.3 20 L20.7 21" stroke="#6a9955" stroke-width="1.9" fill="none"/></svg><svg style="display:inline-block;vertical-align:-3px;" width="23.9" height="24" viewBox="-0.5 0 23.9 24"><path d="M3 4 H20 M11.5 1.5 V9 M5 9 H18 M5 12 H18 V20 H5 Z M5 16 H18 M11.5 12 V20" stroke="#6a9955" stroke-width="1.9" fill="none"/></svg><svg style="display:inline-block;vertical-align:-3px;" width="23.9" height="24" viewBox="-0.5 0 23.9 24"><path d="M2.5 5 H21 M11.5 2 V21 M4 11 L10 17 M19 10 L13 18 M3 21 H20 M5 8 H18" stroke="#6a9955" stroke-width="1.9" fill="none"/></svg><svg style="display:inline-block;vertical-align:-3px;" width="23.9" height="24" viewBox="-0.5 0 23.9 24"><path d="M3 7.6 H7.8 M5.4 2 V21 M2 13.9 H8.3 M9.8 3.0 H21.5 M9.8 8.0 H21.5 M9.8 11.3 H21.5 M14.3 2 V19.6 M9.8 20 L17.4 21" stroke="#6a9955" stroke-width="1.9" fill="none"/></svg><svg style="display:inline-block;vertical-align:-3px;" width="23.9" height="24" viewBox="-0.5 0 23.9 24"><path d="M2.5 5 H21 M11.5 2 V21 M4 11 L10 17 M19 10 L13 18 M3 21 H20 M5 8 H18" stroke="#6a9955" stroke-width="1.9" fill="none"/></svg><svg style="display:inline-block;vertical-align:-3px;" width="23.9" height="24" viewBox="-0.5 0 23.9 24"><path d="M3 6.7 H8.5 M5.7 2 V21 M2 12.8 H9.0 M10.5 3.0 H21.5 M10.5 8.4 H21.5 M14.2 2 V16.8 M10.5 20 L19.3 21" stroke="#6a9955" stroke-width="1.9" fill="none"/></svg><svg style="display:inline-block;vertical-align:-3px;" width="23.9" height="24" viewBox="-0.5 0 23.9 24"><path d="M2.5 5 H21 M11.5 2 V21 M4 11 L10 17 M19 10 L13 18 M3 21 H20 M5 8 H18" stroke="#6a9955" stroke-width="1.9" fill="none"/></svg><svg style="display:inline-block;vertical-align:-3px;" width="23.9" height="24" viewBox="-0.5 0 23.9 24"><path d="M3 4.4 H8.2 M5.6 2 V21 M2 11.3 H8.7 M10.2 3.0 H21.5 M10.2 8.2 H21.5 M10.2 13.0 H21.5 M14.4 2 V17.1 M10.2 20 L18.6 21" stroke="#6a9955" stroke-width="1.9" fill="none"/></svg><svg style="display:inline-block;vertical-align:-3px;" width="23.9" height="24" viewBox="-0.5 0 23.9 24"><path d="M3 7.9 H9.5 M6.2 2 V21 M2 12.8 H10.0 M11.5 3.0 H21.5 M11.5 7.1 H21.5 M15.8 2 V17.0 M11.5 20 L19.9 21" stroke="#6a9955" stroke-width="1.9" fill="none"/></svg><svg style="display:inline-block;vertical-align:-3px;" width="23.9" height="24" viewBox="-0.5 0 23.9 24"><path d="M3 7.9 H9.1 M6.0 2 V21 M2 13.1 H9.6 M11.1 3.0 H21.5 M11.1 7.3 H21.5 M12.6 2 V19.9 M11.1 20 L17.9 21" stroke="#6a9955" stroke-width="1.9" fill="none"/></svg></div>
<div class="t code" style="left:713px;width:100px;text-align:right;top:315.6px;color:#6e7681">14</div>
<div class="t code" style="left:866.4px;top:315.6px;color:#d4d4d4;"><span style="color:#6a9955;">    // const injector = ReflectiveInjector.resolveAndCreate([</span></div>
<div class="t code" style="left:713px;width:100px;text-align:right;top:351.6px;color:#6e7681">15</div>
<div class="t code" style="left:866.4px;top:351.6px;color:#d4d4d4;"><span style="color:#6a9955;">    //   { provide: MailService, useClass: MailService }</span></div>
<div class="t code" style="left:713px;width:100px;text-align:right;top:387.6px;color:#6e7681">16</div>
<div class="t code" style="left:866.4px;top:387.6px;color:#d4d4d4;"><span style="color:#6a9955;">    // ]);</span></div>
<div class="t code" style="left:713px;width:100px;text-align:right;top:423.6px;color:#6e7681">17</div>
<div class="t code" style="left:713px;width:100px;text-align:right;top:459.6px;color:#6e7681">18</div>
<div class="t code" style="left:866.4px;top:459.6px;color:#d4d4d4;"><span style="color:#6a9955;">    // const mailService = injector.get(MailService);</span></div>
<div class="t code" style="left:713px;width:100px;text-align:right;top:495.6px;color:#6e7681">19</div>
<div class="t code" style="left:713px;width:100px;text-align:right;top:531.6px;color:#6e7681">20</div>
<div class="t code" style="left:866.4px;top:531.6px;color:#d4d4d4;"><span style="color:#6a9955;">    // console.log(mailService);</span></div>
<div class="t code" style="left:713px;width:100px;text-align:right;top:567.6px;color:#6e7681">21</div>
<div class="t code" style="left:713px;width:100px;text-align:right;top:603.6px;color:#6e7681">22</div>
<div class="t code" style="left:713px;width:100px;text-align:right;top:639.6px;color:#6e7681">23</div>
<div class="t code" style="left:866.4px;top:639.6px;color:#d4d4d4;"><span style="color:#6a9955;">    // 2. </span><svg style="display:inline-block;vertical-align:-3px;" width="23.9" height="24" viewBox="-0.5 0 23.9 24"><path d="M3 4 H20 M11.5 1.5 V9 M5 9 H18 M5 12 H18 V20 H5 Z M5 16 H18 M11.5 12 V20" stroke="#6a9955" stroke-width="1.9" fill="none"/></svg><svg style="display:inline-block;vertical-align:-3px;" width="23.9" height="24" viewBox="-0.5 0 23.9 24"><path d="M3 5.0 H8.0 M5.5 2 V21 M2 11.1 H8.5 M10.0 3.0 H21.5 M10.0 8.9 H21.5 M10.0 14.7 H21.5 M13.2 2 V18.4 M10.0 20 L18.8 21" stroke="#6a9955" stroke-width="1.9" fill="none"/></svg><svg style="display:inline-block;vertical-align:-3px;" width="23.9" height="24" viewBox="-0.5 0 23.9 24"><path d="M3 6.5 H7.1 M5.1 2 V21 M2 11.2 H7.6 M9.1 3.0 H21.5 M9.1 8.1 H21.5 M9.1 11.6 H21.5 M15.8 2 V16.8 M9.1 20 L19.1 21" stroke="#6a9955" stroke-width="1.9" fill="none"/></svg><svg style="display:inline-block;vertical-align:-3px;" width="23.9" height="24" viewBox="-0.5 0 23.9 24"><path d="M3 5.9 H9.3 M6.2 2 V21 M2 12.7 H9.8 M11.3 3.0 H21.5 M11.3 8.4 H21.5 M12.7 2 V19.3 M11.3 20 L20.7 21" stroke="#6a9955" stroke-width="1.9" fill="none"/></svg><svg style="display:inline-block;vertical-align:-3px;" width="23.9" height="24" viewBox="-0.5 0 23.9 24"><path d="M3 4 H20 M11.5 1.5 V9 M5 9 H18 M5 12 H18 V20 H5 Z M5 16 H18 M11.5 12 V20" stroke="#6a9955" stroke-width="1.9" fill="none"/></svg><svg style="display:inline-block;vertical-align:-3px;" width="23.9" height="24" viewBox="-0.5 0 23.9 24"><path d="M2.5 5 H21 M11.5 2 V21 M4 11 L10 17 M19 10 L13 18 M3 21 H20 M5 8 H18" stroke="#6a9955" stroke-width="1.9" fill="none"/></svg><svg style="display:inline-block;vertical-align:-3px;" width="23.9" height="24" viewBox="-0.5 0 23.9 24"><path d="M3 7.6 H7.8 M5.4 2 V21 M2 13.9 H8.3 M9.8 3.0 H21.5 M9.8 8.0 H21.5 M9.8 11.3 H21.5 M14.3 2 V19.6 M9.8 20 L17.4 21" stroke="#6a9955" stroke-width="1.9" fill="none"/></svg><svg style="display:inline-block;vertical-align:-3px;" width="23.9" height="24" viewBox="-0.5 0 23.9 24"><path d="M2.5 5 H21 M11.5 2 V21 M4 11 L10 17 M19 10 L13 18 M3 21 H20 M5 8 H18" stroke="#6a9955" stroke-width="1.9" fill="none"/></svg><svg style="display:inline-block;vertical-align:-3px;" width="23.9" height="24" viewBox="-0.5 0 23.9 24"><path d="M3 6.7 H8.5 M5.7 2 V21 M2 12.8 H9.0 M10.5 3.0 H21.5 M10.5 8.4 H21.5 M14.2 2 V16.8 M10.5 20 L19.3 21" stroke="#6a9955" stroke-width="1.9" fill="none"/></svg><svg style="display:inline-block;vertical-align:-3px;" width="23.9" height="24" viewBox="-0.5 0 23.9 24"><path d="M3 4 H20 M11.5 1.5 V9 M5 9 H18 M5 12 H18 V20 H5 Z M5 16 H18 M11.5 12 V20" stroke="#6a9955" stroke-width="1.9" fill="none"/></svg><svg style="display:inline-block;vertical-align:-3px;" width="23.9" height="24" viewBox="-0.5 0 23.9 24"><path d="M2.5 5 H21 M11.5 2 V21 M4 11 L10 17 M19 10 L13 18 M3 21 H20 M5 8 H18" stroke="#6a9955" stroke-width="1.9" fill="none"/></svg><svg style="display:inline-block;vertical-align:-3px;" width="23.9" height="24" viewBox="-0.5 0 23.9 24"><path d="M3 4.4 H8.2 M5.6 2 V21 M2 11.3 H8.7 M10.2 3.0 H21.5 M10.2 8.2 H21.5 M10.2 13.0 H21.5 M14.4 2 V17.1 M10.2 20 L18.6 21" stroke="#6a9955" stroke-width="1.9" fill="none"/></svg><svg style="display:inline-block;vertical-align:-3px;" width="23.9" height="24" viewBox="-0.5 0 23.9 24"><path d="M3 7.9 H9.5 M6.2 2 V21 M2 12.8 H10.0 M11.5 3.0 H21.5 M11.5 7.1 H21.5 M15.8 2 V17.0 M11.5 20 L19.9 21" stroke="#6a9955" stroke-width="1.9" fill="none"/></svg><svg style="display:inline-block;vertical-align:-3px;" width="23.9" height="24" viewBox="-0.5 0 23.9 24"><path d="M2.5 5 H21 M11.5 2 V21 M4 11 L10 17 M19 10 L13 18 M3 21 H20 M5 8 H18" stroke="#6a9955" stroke-width="1.9" fill="none"/></svg><svg style="display:inline-block;vertical-align:-3px;" width="23.9" height="24" viewBox="-0.5 0 23.9 24"><path d="M3 4 H20 M11.5 1.5 V9 M5 9 H18 M5 12 H18 V20 H5 Z M5 16 H18 M11.5 12 V20" stroke="#6a9955" stroke-width="1.9" fill="none"/></svg><svg style="display:inline-block;vertical-align:-3px;" width="23.9" height="24" viewBox="-0.5 0 23.9 24"><path d="M2.5 5 H21 M11.5 2 V21 M4 11 L10 17 M19 10 L13 18 M3 21 H20 M5 8 H18" stroke="#6a9955" stroke-width="1.9" fill="none"/></svg><svg style="display:inline-block;vertical-align:-3px;" width="23.9" height="24" viewBox="-0.5 0 23.9 24"><path d="M3 7.9 H9.1 M6.0 2 V21 M2 13.1 H9.6 M11.1 3.0 H21.5 M11.1 7.3 H21.5 M12.6 2 V19.9 M11.1 20 L17.9 21" stroke="#6a9955" stroke-width="1.9" fill="none"/></svg><svg style="display:inline-block;vertical-align:-3px;" width="23.9" height="24" viewBox="-0.5 0 23.9 24"><path d="M3 4 H20 M11.5 1.5 V9 M5 9 H18 M5 12 H18 V20 H5 Z M5 16 H18 M11.5 12 V20" stroke="#6a9955" stroke-width="1.9" fill="none"/></svg></div>
<div class="t code" style="left:713px;width:100px;text-align:right;top:675.6px;color:#6e7681">24</div>
<div class="t code" style="left:866.4px;top:675.6px;color:#d4d4d4;"><span style="color:#6a9955;">    // const injector = ReflectiveInjector.resolveAndCreate([</span></div>
<div class="t code" style="left:713px;width:100px;text-align:right;top:711.6px;color:#6e7681">25</div>
<div class="t code" style="left:866.4px;top:711.6px;color:#d4d4d4;"><span style="color:#6a9955;">    //   { provide: "mail", useClass: MailService }</span></div>
<div class="t code" style="left:713px;width:100px;text-align:right;top:747.6px;color:#6e7681">26</div>
<div class="t code" style="left:866.4px;top:747.6px;color:#d4d4d4;"><span style="color:#6a9955;">    // ])</span></div>
<div class="t code" style="left:713px;width:100px;text-align:right;top:783.6px;color:#6e7681">27</div>
<div class="t code" style="left:866.4px;top:783.6px;color:#d4d4d4;"><span style="color:#6a9955;">    // const mailService = injector.get("mail")</span></div>
<div class="t code" style="left:713px;width:100px;text-align:right;top:819.6px;color:#6e7681">28</div>
<div class="t code" style="left:713px;width:100px;text-align:right;top:855.6px;color:#6e7681">29</div>
<div class="t code" style="left:866.4px;top:855.6px;color:#d4d4d4;"><span style="color:#6a9955;">    // 3. useValue</span></div>
<div class="t code" style="left:713px;width:100px;text-align:right;top:891.6px;color:#6e7681">30</div>
<div class="t code" style="left:866.4px;top:891.6px;color:#d4d4d4;">    <span style="color:#569cd6;">const</span> <span style="color:#4fc1ff;">injector</span> = <span style="color:#4ec9b0;text-decoration:line-through;">ReflectiveInjector</span>.<span style="color:#dcdcaa;">resolveAndCreate</span><span style="color:#179fff;">(</span><span style="color:#ffd700;">[</span></div>
<div class="t code" style="left:713px;width:100px;text-align:right;top:927.6px;color:#6e7681">31</div>
<div class="t code" style="left:866.4px;top:927.6px;color:#d4d4d4;">      <span style="color:#da70d6;">{</span></div>
<div class="t code" style="left:713px;width:100px;text-align:right;top:963.6px;color:#6e7681">32</div>
<div class="t code" style="left:866.4px;top:963.6px;color:#d4d4d4;">        <span style="color:#9cdcfe;">provide</span>: <span style="color:#ce9178;">"Config"</span>,</div>
<div class="t code" style="left:713px;width:100px;text-align:right;top:999.6px;color:#6e7681">33</div>
<div class="t code" style="left:866.4px;top:999.6px;color:#d4d4d4;">        <span style="color:#9cdcfe;">useValue</span>: <span style="color:#4ec9b0;">Object</span>.<span style="color:#dcdcaa;">freeze</span><span style="color:#179fff;">(</span><span style="color:#ffd700;">{</span></div>
<div class="t code" style="left:713px;width:100px;text-align:right;top:1035.6px;color:#6e7681">34</div>
<div class="t code" style="left:866.4px;top:1035.6px;color:#d4d4d4;">          <span style="color:#9cdcfe;">APIKEY</span>: <span style="color:#ce9178;">"API1234567890"</span>,</div>
<div class="t code" style="left:713px;width:100px;text-align:right;top:1071.6px;color:#6e7681">35</div>
<div class="t code" style="left:866.4px;top:1071.6px;color:#d4d4d4;">          <span style="color:#9cdcfe;">APISCRET</span>: <span style="color:#ce9178;">"500-400-300"</span></div>
<div class="t code" style="left:713px;width:100px;text-align:right;top:1107.6px;color:#6e7681">36</div>
<div class="t code" style="left:866.4px;top:1107.6px;color:#d4d4d4;">        <span style="color:#ffd700;">}</span><span style="color:#179fff;">)</span></div>
<div class="t code" style="left:713px;width:100px;text-align:right;top:1143.6px;color:#6e7681">37</div>
<div class="t code" style="left:866.4px;top:1143.6px;color:#d4d4d4;">      <span style="color:#da70d6;">}</span></div>
<div class="t code" style="left:713px;width:100px;text-align:right;top:1179.6px;color:#6e7681">38</div>
<div class="t code" style="left:866.4px;top:1179.6px;color:#d4d4d4;">    <span style="color:#ffd700;">]</span><span style="color:#179fff;">)</span></div>
<div class="t code" style="left:713px;width:100px;text-align:right;top:1215.6px;color:#6e7681">39</div>
<div class="t code" style="left:866.4px;top:1215.6px;color:#d4d4d4;">    <span style="color:#569cd6;">const</span> <span style="color:#4fc1ff;">mailService</span> = <span style="color:#4fc1ff;">injector</span>.<span style="color:#dcdcaa;">get</span><span style="color:#179fff;">(</span><span style="color:#ce9178;">"Config"</span><span style="color:#179fff;">)</span></div>
<div class="t code" style="left:713px;width:100px;text-align:right;top:1251.6px;color:#6e7681">40</div>
<div class="t code" style="left:713px;width:100px;text-align:right;top:1287.6px;color:#6e7681">41</div>
<div class="t code" style="left:866.4px;top:1287.6px;color:#d4d4d4;">    <span style="color:#9cdcfe;">console</span>.<span style="color:#dcdcaa;">log</span><span style="color:#179fff;">(</span><span style="color:#4fc1ff;">mailService</span><span style="color:#179fff;">)</span>;</div>
<div class="t code" style="left:713px;width:100px;text-align:right;top:1323.6px;color:#6e7681">42</div>
<div class="t code" style="left:713px;width:100px;text-align:right;top:1359.6px;color:#cccccc">43</div>
<div class="t code" style="left:866.4px;top:1359.6px;color:#d4d4d4;">  <span style="color:#da70d6;">}</span></div>
<div class="t code" style="left:713px;width:100px;text-align:right;top:1395.6px;color:#6e7681">44</div>
<div class="t code" style="left:713px;width:100px;text-align:right;top:1431.6px;color:#6e7681">45</div>
<div class="t code" style="left:866.4px;top:1431.6px;color:#d4d4d4;"><span style="color:#ffd700;">}</span></div>
<div class="t code" style="left:713px;width:100px;text-align:right;top:1467.6px;color:#6e7681">46</div>
<div class="t code" style="left:713px;width:100px;text-align:right;top:1503.6px;color:#6e7681">47</div>
<div class="t code" style="left:866.4px;top:1503.6px;color:#d4d4d4;"><span style="color:#569cd6;opacity:0.7">class</span> <span style="color:#4ec9b0;opacity:0.7">MailService</span> <span style="color:#ffd700;">{</span></div>
<div class="t code" style="left:713px;width:100px;text-align:right;top:1539.6px;color:#6e7681">48</div>
<div class="t code" style="left:866.4px;top:1539.6px;color:#d4d4d4;"><span style="color:#ffd700;">}</span></div>
<div class="t code" style="left:713px;width:100px;text-align:right;top:1575.6px;color:#6e7681">49</div>
<div class="r" style="left:894px;top:1361px;width:15px;height:31px;background:transparent;border:1.5px solid #8a8a8a;box-sizing:border-box;"></div>
<svg class="s" style="left:872px;top:1322px;" width="24" height="30" viewBox="0 0 24 30"><path d="M12 2 C5.5 2 2 6.5 2 11.5 C2 15 4 17.5 6.5 19.5 L7 22 H17 L17.5 19.5 C20 17.5 22 15 22 11.5 C22 6.5 18.5 2 12 2 Z" fill="#ffcc00"/><rect x="8" y="23" width="8" height="5" rx="1.5" fill="#ffcc00"/><rect x="10" y="24.5" width="4" height="2" fill="#1f1f1f"/></svg>
<div class="r" style="left:734px;top:260px;width:1664px;height:72px;background:#1f1f1f;"></div>
<div class="r" style="left:738px;top:332px;width:1660px;height:6px;background:linear-gradient(#000000cc,#00000000);"></div>
<div class="t code" style="left:713px;width:100px;text-align:right;top:260.0px;color:#6e7681">8</div>
<div class="t code" style="left:713px;width:100px;text-align:right;top:296.0px;color:#6e7681">12</div>
<div class="t code" style="left:866.4px;top:260.0px;color:#d4d4d4;"><span style="color:#c586c0;">export</span> <span style="color:#569cd6;">class</span> <span style="color:#4ec9b0;">ProviderComponent</span> <span style="color:#569cd6;">implements</span> <span style="color:#4ec9b0;">OnInit</span> <span style="color:#ffd700;">{</span></div>
<div class="t code" style="left:866.4px;top:296.0px;color:#d4d4d4;">  <span style="color:#dcdcaa;">ngOnInit</span><span style="color:#da70d6;">()</span>: <span style="color:#4ec9b0;">void</span> <span style="color:#da70d6;">{</span></div>
<div class="t" style="left:2406px;top:260.0px;font-family:'Liberation Mono', monospace;font-size:3.367px;line-height:4px;color:#d4d4d4;opacity:1.0;font-weight:bold;-webkit-text-stroke:0.25px currentColor;"><span style="color:#c586c0;">import</span> { <span style="color:#9cdcfe;">Component</span>, <span style="color:#9cdcfe;">OnInit</span>, <span style="color:#9cdcfe;">ReflectiveInjector</span> } <span style="color:#c586c0;">from</span> <span style="color:#ce9178;">'@angular/core'</span>;<br><br><span style="color:#d4d4d4;">@</span><span style="color:#4ec9b0;">Component</span><span style="color:#d4d4d4;">({</span><br>  <span style="color:#9cdcfe;">selector</span>: <span style="color:#ce9178;">'app-provider'</span>,<br>  <span style="color:#9cdcfe;">templateUrl</span>: <span style="color:#ce9178;">'./provider.component.html'</span>,<br>  <span style="color:#9cdcfe;">styleUrls</span>: [<span style="color:#ce9178;">'./provider.component.css'</span>]<br>})<br><span style="color:#c586c0;">export</span> <span style="color:#569cd6;">class</span> <span style="color:#4ec9b0;">ProviderComponent</span> <span style="color:#569cd6;">implements</span> <span style="color:#4ec9b0;">OnInit</span> {<br><br>  <span style="color:#569cd6;">constructor</span>() { }<br><br>  <span style="color:#dcdcaa;">ngOnInit</span>(): <span style="color:#4ec9b0;">void</span> {<br><span style="color:#6a9955;">    // 1. xxxxxxxxxxxxxxxxxxxxxxxxxxxxxxxxxxxxxxxxxxxxxxxxxxxxxxxx</span><br><span style="color:#6a9955;">    // const injector = ReflectiveInjector.resolveAndCreate([</span><br><span style="color:#6a9955;">    //   { provide: MailService, useClass: MailService }</span><br><span style="color:#6a9955;">    // ]);</span><br><br><span style="color:#6a9955;">    // const mailService = injector.get(MailService);</span><br><br><span style="color:#6a9955;">    // console.log(mailService);</span><br><br><br><span style="color:#6a9955;">    // 2. xxxxxxxxxxxxxxxxxxxxxxxxxxxx</span><br><span style="color:#6a9955;">    // const injector = ReflectiveInjector.resolveAndCreate([</span><br><span style="color:#6a9955;">    //   { provide: "mail", useClass: MailService }</span><br><span style="color:#6a9955;">    // ])</span><br><span style="color:#6a9955;">    // const mailService = injector.get("mail")</span><br><br><span style="color:#6a9955;">    // 3. useValue</span><br>    <span style="color:#569cd6;">const</span> <span style="color:#4fc1ff;">injector</span> = <span style="color:#4ec9b0;text-decoration:line-through;">ReflectiveInjector</span>.<span style="color:#dcdcaa;">resolveAndCreate</span><span style="color:#179fff;">(</span><span style="color:#ffd700;">[</span><br>      <span style="color:#da70d6;">{</span><br>        <span style="color:#9cdcfe;">provide</span>: <span style="color:#ce9178;">"Config"</span>,<br>        <span style="color:#9cdcfe;">useValue</span>: <span style="color:#4ec9b0;">Object</span>.<span style="color:#dcdcaa;">freeze</span><span style="color:#179fff;">(</span><span style="color:#ffd700;">{</span><br>          <span style="color:#9cdcfe;">APIKEY</span>: <span style="color:#ce9178;">"API1234567890"</span>,<br>          <span style="color:#9cdcfe;">APISCRET</span>: <span style="color:#ce9178;">"500-400-300"</span><br>        <span style="color:#ffd700;">}</span><span style="color:#179fff;">)</span><br>      <span style="color:#da70d6;">}</span><br>    <span style="color:#ffd700;">]</span><span style="color:#179fff;">)</span><br>    <span style="color:#569cd6;">const</span> <span style="color:#4fc1ff;">mailService</span> = <span style="color:#4fc1ff;">injector</span>.<span style="color:#dcdcaa;">get</span><span style="color:#179fff;">(</span><span style="color:#ce9178;">"Config"</span><span style="color:#179fff;">)</span><br><br>    <span style="color:#9cdcfe;">console</span>.<span style="color:#dcdcaa;">log</span><span style="color:#179fff;">(</span><span style="color:#4fc1ff;">mailService</span><span style="color:#179fff;">)</span>;<br><br>  <span style="color:#da70d6;">}</span><br><br><span style="color:#ffd700;">}</span><br><br><span style="color:#569cd6;opacity:0.7">class</span> <span style="color:#4ec9b0;opacity:0.7">MailService</span> <span style="color:#ffd700;">{</span><br><span style="color:#ffd700;">}</span><br></div>
<div class="r" style="left:2626px;top:260px;width:1px;height:1348px;background:#171717;"></div>
<div class="r" style="left:2626px;top:260px;width:28px;height:1px;background:#171717;"></div>
<div class="r" style="left:2626px;top:442px;width:28px;height:590px;background:#3f3f3f;"></div>
<div class="r" style="left:2636px;top:433px;width:9px;height:16px;background:#9e9e9e;"></div>
<div class="r" style="left:2627px;top:920px;width:27px;height:3px;background:#8a8a8a;"></div>
<div class="r" style="left:2636px;top:923px;width:9px;height:16px;background:#9e9e9e;"></div>
<div class="r" style="left:734px;top:1608px;width:1920px;height:2px;background:#2b2b2b;"></div>
<div class="r" style="left:734px;top:1610px;width:1920px;height:68px;background:#181818;"></div>
<div class="r" style="left:734px;top:1610px;width:371px;height:68px;background:#1f1f1f;"></div>
<div class="r" style="left:1105px;top:1610px;width:2px;height:68px;background:#2b2b2b;"></div>
<svg class="s" style="left:763px;top:1635px;" width="22" height="20" viewBox="0 0 22 20"><path d="M7.5 3 L2 10 L7.5 17 M14.5 3 L20 10 L14.5 17" stroke="#e37933" stroke-width="2.4" fill="none"/></svg>
<div class="t" style="left:798.0px;top:1631.0px;font-size:26px;line-height:26px;color:#a0a0a0;font-family:'Liberation Sans', sans-serif;font-weight:normal;letter-spacing:0.75px;">app.component.html</div>
<svg class="s" style="left:1066px;top:1632px;" width="22" height="22" viewBox="0 0 22 22"><path d="M2.5 3 L19.5 20 M19.5 3 L2.5 20" stroke="#a0a0a0" stroke-width="2"/></svg>
<svg class="s" style="left:2593px;top:1635px;" width="32" height="16" viewBox="0 0 32 16"><circle cx="4" cy="8" r="2.6" fill="#cccccc"/><circle cx="14" cy="8" r="2.6" fill="#cccccc"/><circle cx="24" cy="8" r="2.6" fill="#cccccc"/></svg>
<div class="r" style="left:734px;top:1678px;width:1920px;height:238px;background:#1f1f1f;"></div>
<div class="t" style="left:766.4px;top:1688.0px;font-size:26px;line-height:26px;color:#a9a9a9;font-family:'Liberation Sans', sans-serif;font-weight:normal;letter-spacing:0.75px;">src</div>
<svg class="s" style="left:815px;top:1691px;" width="12" height="20" viewBox="0 0 12 20"><path d="M2 1.5 L10 10 L2 18.5" stroke="#a9a9a9" stroke-width="2" fill="none"/></svg>
<div class="t" style="left:836.0px;top:1688.0px;font-size:26px;line-height:26px;color:#a9a9a9;font-family:'Liberation Sans', sans-serif;font-weight:normal;letter-spacing:0.75px;">app</div>
<svg class="s" style="left:892px;top:1691px;" width="12" height="20" viewBox="0 0 12 20"><path d="M2 1.5 L10 10 L2 18.5" stroke="#a9a9a9" stroke-width="2" fill="none"/></svg>
<svg class="s" style="left:922px;top:1690px;" width="22" height="20" viewBox="0 0 22 20"><path d="M7.5 3 L2 10 L7.5 17 M14.5 3 L20 10 L14.5 17" stroke="#e37933" stroke-width="2.4" fill="none"/></svg>
<div class="t" style="left:957.4px;top:1688.0px;font-size:26px;line-height:26px;color:#a9a9a9;font-family:'Liberation Sans', sans-serif;font-weight:normal;letter-spacing:0.75px;">app.component.html</div>
<svg class="s" style="left:1218px;top:1691px;" width="12" height="20" viewBox="0 0 12 20"><path d="M2 1.5 L10 10 L2 18.5" stroke="#a9a9a9" stroke-width="2" fill="none"/></svg>
<div class="t" style="left:1241.0px;top:1688.0px;font-size:26px;line-height:26px;color:#a9a9a9;font-family:'Liberation Sans', sans-serif;font-weight:normal;letter-spacing:1px;">...</div>
<div class="r" style="left:866px;top:1723px;width:1532px;height:2px;background:#282828;"></div>
<div class="r" style="left:866px;top:1755px;width:1532px;height:2px;background:#282828;"></div>
<div class="t code" style="left:713px;width:100px;text-align:right;top:1723.4px;color:#cccccc">67</div>
<div class="t code" style="left:866.4px;top:1723.4px;color:#d4d4d4;"><span style="color:#6a9955;">&lt;!-- dependency injection --&gt;</span></div>
<div class="t code" style="left:713px;width:100px;text-align:right;top:1759.4px;color:#6e7681">68</div>
<div class="t code" style="left:866.4px;top:1759.4px;color:#d4d4d4;"><span style="color:#6a9955;">&lt;!-- &lt;app-injector&gt;&lt;/app-injector&gt; --&gt;</span></div>
<div class="t code" style="left:713px;width:100px;text-align:right;top:1795.4px;color:#6e7681">69</div>
<div class="t code" style="left:713px;width:100px;text-align:right;top:1831.4px;color:#6e7681">70</div>
<div class="t code" style="left:866.4px;top:1831.4px;color:#d4d4d4;"><span style="color:#808080;">&lt;</span><span style="color:#569cd6;">app-provider</span><span style="color:#808080;">&gt;&lt;/</span><span style="color:#569cd6;">app-provider</span><span style="color:#808080;">&gt;</span></div>
<div class="t code" style="left:713px;width:100px;text-align:right;top:1867.4px;color:#6e7681">71</div>
<div class="t code" style="left:713px;width:100px;text-align:right;top:1903.4px;color:#6e7681">72</div>
<div class="t" style="left:2406px;top:1726.0px;font-family:'Liberation Mono', monospace;font-size:3.367px;line-height:4px;color:#d4d4d4;opacity:1.0;font-weight:bold;-webkit-text-stroke:0.25px currentColor;"><span style="color:#6a9955;">&lt;!-- xxxxxxx xxxxxxx xxxxxxx xxxxxxx xxxxx --&gt;</span><br><br><br><span style="color:#6a9955;">&lt;!-- xxxxxxx xxxxxxx xxxxx --&gt;</span><br><br><br><span style="color:#6a9955;">&lt;!-- xxxxxxx xxxxxxx xxxxxxx xxxxxxx xxxxxxx x --&gt;</span><br><span style="color:#6a9955;">&lt;!-- xxxxxxx xxxxxxx xxxxxxx xxxxxxx xxxxxxx xxxxxxx xxxxxxx xxxxxxx xxxxx --&gt;</span><br><br><br><span style="color:#6a9955;">&lt;!-- xxxxxxx xxxxxxx --&gt;</span><br><span style="color:#6a9955;">&lt;!-- xxxxxxx xxxxxxx xxxxxxx xxxxxxx xxxxxxx xxxxxxx --&gt;</span><br><br><span style="color:#6a9955;">&lt;!-- xxxxxxx xxxxxxx xxxxxxx xxxxxxx xxxxxxx xxxxxxx xxx --&gt;</span><br><span style="color:#6a9955;">&lt;!-- xxxxxxx xxxxxxx xxxxxxx xxxxx --&gt;</span><br><span style="color:#6a9955;">&lt;!-- xxxxxxx xxxxxxx xxxxxxx xxxxxxx xxxxxxx xxxxx --&gt;</span><br><span style="color:#6a9955;">&lt;!-- xxxxxxx xxxxxxx xxxxxxx xx --&gt;</span><br><span style="color:#6a9955;">&lt;!-- xxxxxxx xxxxxxx xxxxxxx xxxxxxx xxxxxxx xx --&gt;</span><br><br><br><br><span style="color:#6a9955;">&lt;!-- xxxxxxx xxxxxxx xxxxxxx xxxxxxx xxxxxxx xx --&gt;</span><br><span style="color:#6a9955;">&lt;!-- xxxxxxx --&gt;</span><br><span style="color:#6a9955;">&lt;!-- xxxxxxx --&gt;</span><br><span style="color:#6a9955;">&lt;!-- xxxxxxx xxxxxxx xx --&gt;</span><br><span style="color:#6a9955;">&lt;!-- x --&gt;</span><br><span style="color:#6a9955;">  &lt;!-- xxxxxxx xxxxxxx xxxxxxx xxxxxxx xxxxxxx xxxx --&gt;</span><br><span style="color:#6a9955;">&lt;!-- xxx --&gt;</span><br><span style="color:#6a9955;">&lt;!-- xx --&gt;</span><br><span style="color:#6a9955;">  &lt;!-- xxxxxxx xxxxxxx xxxxxxx xxxxxxx xxxxxxx xxxxxxx xxxxxxx xxxxx --&gt;</span><br><span style="color:#6a9955;">&lt;!--  --&gt;</span><br><span style="color:#6a9955;">&lt;!-- xxxxxxx xxxxxxx xxxxxxx xx --&gt;</span><br><br><br><br><br><span style="color:#6a9955;">&lt;!-- xxxxxxx xxxxxxx xxxx --&gt;</span><br><span style="color:#6a9955;">&lt;!-- xxxxxxx xxxxxxx xxxxxxx xxxxx --&gt;</span><br><br><span style="color:#808080;">&lt;</span><span style="color:#569cd6;">app-provider</span><span style="color:#808080;">&gt;&lt;/</span><span style="color:#569cd6;">app-provider</span><span style="color:#808080;">&gt;</span><br><br><br><br><span style="color:#6a9955;">&lt;!-- xxxxx --&gt;</span><br><span style="color:#6a9955;">&lt;!-- xxxxxxx xxxxxxx xxxxxxx xxxxxxx x --&gt;</span><br><span style="color:#6a9955;">&lt;!-- xxxxxxx xxxxxxx xxxxxxx xxxxxxx --&gt;</span><br><span style="color:#6a9955;">&lt;!-- xxxxxxx xxxxxxx xxxxxxx xxxxxxx xxxxxxx xxxxxxx --&gt;</span><br></div>
<div class="r" style="left:2734px;top:1722px;width:1px;height:1px;background:#1f1f1f;"></div>
<div class="r" style="left:2626px;top:1722px;width:1px;height:194px;background:#171717;"></div>
<div class="r" style="left:2626px;top:1722px;width:28px;height:1px;background:#171717;"></div>
<div class="r" style="left:2628px;top:1870px;width:26px;height:4px;background:#8a8a8a;"></div>
<div class="r" style="left:734px;top:1916px;width:1920px;height:381px;background:#181818;"></div>
<div class="r" style="left:734px;top:1916px;width:1920px;height:2px;background:#2b2b2b;"></div>
<div class="t" style="left:774.0px;top:1941.4px;font-size:22px;line-height:22px;color:#9d9d9d;font-family:'Liberation Sans', sans-serif;font-weight:normal;letter-spacing:-0.41px;">PROBLEMS</div>
<div class="t" style="left:942.0px;top:1941.4px;font-size:22px;line-height:22px;color:#9d9d9d;font-family:'Liberation Sans', sans-serif;font-weight:normal;letter-spacing:-0.35px;">OUTPUT</div>
<div class="t" style="left:1081.5px;top:1941.4px;font-size:22px;line-height:22px;color:#9d9d9d;font-family:'Liberation Sans', sans-serif;font-weight:normal;letter-spacing:-0.26px;">DEBUG CONSOLE</div>
<div class="t" style="left:1319.0px;top:1941.4px;font-size:22px;line-height:22px;color:#9d9d9d;font-family:'Liberation Sans', sans-serif;font-weight:normal;letter-spacing:-0.35px;">COMMENTS</div>
<div class="t" style="left:1497.0px;top:1941.4px;font-size:22px;line-height:22px;color:#9d9d9d;font-family:'Liberation Sans', sans-serif;font-weight:normal;letter-spacing:-0.35px;">PORTS</div>
<div class="t" style="left:1619.0px;top:1941.4px;font-size:22px;line-height:22px;color:#e7e7e7;font-family:'Liberation Sans', sans-serif;font-weight:normal;letter-spacing:-0.35px;">TERMINAL</div>
<div class="r" style="left:1615px;top:1972px;width:119px;height:2px;background:#0078d4;"></div>
<svg class="s" style="left:2412px;top:1934px;" width="220" height="36" viewBox="0 0 220 36"><path d="M19 4.5 V30.5 M6 17.5 H32" stroke="#cccccc" stroke-width="2.2"/><path d="M43 15 L50 22 L57 15" stroke="#cccccc" stroke-width="2" fill="none"/><circle cx="83.5" cy="19" r="2.2" fill="#cccccc"/><circle cx="94" cy="19" r="2.2" fill="#cccccc"/><circle cx="104" cy="19" r="2.2" fill="#cccccc"/><path d="M134 22.5 L144 12 L154 22.5" stroke="#cccccc" stroke-width="2.2" fill="none"/><path d="M188 10 L204 26.5 M204 10 L188 26.5" stroke="#cccccc" stroke-width="2.2"/></svg>
<svg class="s" style="left:772px;top:1993.7px;" width="20" height="16" viewBox="0 0 20 16"><path d="M3 8 H15.5 M11 3.5 L15.5 8 L11 12.5" stroke="#23d18b" stroke-width="2.6" fill="none" stroke-linecap="round" stroke-linejoin="round"/></svg>
<div class="t" style="left:774px;top:1989.2px;font-family:'Liberation Mono', monospace;font-size:23.33px;line-height:28px;color:#cccccc;"><span style="color:#cccccc;">   </span><span style="color:#29b8db;font-weight:bold;">angular-study</span><span style="color:#cccccc;"> </span><span style="color:#3b8eea;font-weight:bold;">git:(</span><span style="color:#f14c4c;font-weight:bold;">main</span><span style="color:#3b8eea;font-weight:bold;">)</span><span style="color:#cccccc;"> </span><span style="color:#f5f543;font-weight:bold;"> </span><span style="color:#cccccc;"> ng g c components/dependency-injection/provider</span></div>
<svg class="s" style="left:1165px;top:1991.7px;" width="18" height="20" viewBox="0 0 18 20"><path d="M14 3 L4 18 M5 6 C7 9 9 12 13 17" stroke="#f5f543" stroke-width="2.6" fill="none" stroke-linecap="round"/></svg>
<div class="t" style="left:774px;top:2017.2px;font-family:'Liberation Mono', monospace;font-size:23.33px;line-height:28px;color:#cccccc;"><span style="color:#23d18b;">CREATE</span><span style="color:#cccccc;"> src/app/components/dependency-injection/provider/provider.component.css (0 bytes)</span></div>
<div class="t" style="left:774px;top:2045.2px;font-family:'Liberation Mono', monospace;font-size:23.33px;line-height:28px;color:#cccccc;"><span style="color:#23d18b;">CREATE</span><span style="color:#cccccc;"> src/app/components/dependency-injection/provider/provider.component.html (23 bytes)</span></div>
<div class="t" style="left:774px;top:2073.2px;font-family:'Liberation Mono', monospace;font-size:23.33px;line-height:28px;color:#cccccc;"><span style="color:#23d18b;">CREATE</span><span style="color:#cccccc;"> src/app/components/dependency-injection/provider/provider.component.spec.ts (613 bytes)</span></div>
<div class="t" style="left:774px;top:2101.2px;font-family:'Liberation Mono', monospace;font-size:23.33px;line-height:28px;color:#cccccc;"><span style="color:#23d18b;">CREATE</span><span style="color:#cccccc;"> src/app/components/dependency-injection/provider/provider.component.ts (283 bytes)</span></div>
<div class="t" style="left:774px;top:2129.2px;font-family:'Liberation Mono', monospace;font-size:23.33px;line-height:28px;color:#cccccc;"><span style="color:#29b8db;">UPDATE</span><span style="color:#cccccc;"> src/app/app.module.ts (5138 bytes)</span></div>
<svg class="s" style="left:772px;top:2161.7px;" width="20" height="16" viewBox="0 0 20 16"><path d="M3 8 H15.5 M11 3.5 L15.5 8 L11 12.5" stroke="#23d18b" stroke-width="2.6" fill="none" stroke-linecap="round" stroke-linejoin="round"/></svg>
<div class="t" style="left:774px;top:2157.2px;font-family:'Liberation Mono', monospace;font-size:23.33px;line-height:28px;color:#cccccc;"><span style="color:#cccccc;">   </span><span style="color:#29b8db;font-weight:bold;">angular-study</span><span style="color:#cccccc;"> </span><span style="color:#3b8eea;font-weight:bold;">git:(</span><span style="color:#f14c4c;font-weight:bold;">main</span><span style="color:#3b8eea;font-weight:bold;">)</span><span style="color:#cccccc;"> </span><span style="color:#f5f543;font-weight:bold;"> </span><span style="color:#cccccc;"> </span></div>
<svg class="s" style="left:1165px;top:2159.7px;" width="18" height="20" viewBox="0 0 18 20"><path d="M14 3 L4 18 M5 6 C7 9 9 12 13 17" stroke="#f5f543" stroke-width="2.6" fill="none" stroke-linecap="round"/></svg>
<svg class="s" style="left:746px;top:1992px;" width="20" height="20" viewBox="0 0 20 20"><circle cx="10" cy="10" r="8" fill="#1b80b2"/></svg>
<svg class="s" style="left:746px;top:2160px;" width="20" height="20" viewBox="0 0 20 20"><circle cx="10" cy="9.5" r="7" stroke="#5f5f5f" stroke-width="2.2" fill="none"/></svg>
<div class="r" style="left:1194px;top:2157px;width:14px;height:27px;background:transparent;border:2px solid #cccccc;box-sizing:border-box;"></div>
<div class="r" style="left:2197px;top:1988px;width:2px;height:309px;background:#0e0e0e;"></div>
<div class="r" style="left:2197px;top:1987px;width:30px;height:2px;background:#0e0e0e;"></div>
<div class="r" style="left:2199px;top:1988px;width:10px;height:6px;background:#1b80b2;"></div>
<div class="r" style="left:2199px;top:2150px;width:10px;height:10px;background:#5a5a5a;"></div>
<div class="r" style="left:2227px;top:1982px;width:2px;height:315px;background:#2b2b2b;"></div>
<svg class="s" style="left:2249px;top:1995px;" width="30" height="28" viewBox="0 0 30 28"><rect x="1.5" y="1.5" width="26" height="25" rx="2.5" stroke="#cccccc" stroke-width="2.2" fill="none"/><path d="M7 8 L13 13.5 L7 19 M14 20 H22" stroke="#cccccc" stroke-width="2.2" fill="none"/></svg>
<div class="t" style="left:2287.0px;top:1995.5px;font-size:26px;line-height:26px;color:#cccccc;font-family:'Liberation Sans', sans-serif;font-weight:normal;letter-spacing:0.67px;">node</div>
<div class="r" style="left:2229px;top:2030px;width:425px;height:43px;background:#2a2a2e;"></div>
<div class="r" style="left:2229px;top:2030px;width:3px;height:43px;background:#0078d4;"></div>
<svg class="s" style="left:2249px;top:2038px;" width="30" height="28" viewBox="0 0 30 28"><rect x="1.5" y="1.5" width="26" height="25" rx="2.5" stroke="#cccccc" stroke-width="2.2" fill="none"/><path d="M7 8 L13 13.5 L7 19 M14 20 H22" stroke="#cccccc" stroke-width="2.2" fill="none"/></svg>
<div class="t" style="left:2287.0px;top:2039.0px;font-size:26px;line-height:26px;color:#cccccc;font-family:'Liberation Sans', sans-serif;font-weight:normal;letter-spacing:0.67px;">zsh</div>
<div class="r" style="left:112px;top:2296px;width:2542px;height:43px;background:#181818;"></div>
<div class="r" style="left:112px;top:2296px;width:2542px;height:2px;background:#2b2b2b;"></div>
<div class="r" style="left:112px;top:2298px;width:68px;height:41px;background:#0078d4;"></div>
<svg class="s" style="left:130px;top:2302px;" width="34" height="34" viewBox="0 0 34 34"><path d="M7.3 13 L15.3 19.8 L7.3 27.6" stroke="#ffffff" stroke-width="2.4" fill="none"/><path d="M25 4.5 L17 11.5 L25 18.6" stroke="#ffffff" stroke-width="2.4" fill="none"/></svg>
<svg class="s" style="left:196px;top:2303px;" width="30" height="30" viewBox="0 0 30 30"><path d="M3 3 L15 15 L3 27 Z M10 3 L22 15 L10 27" stroke="#cccccc" stroke-width="2.2" fill="none" stroke-linejoin="round"/></svg>
<div class="t" style="left:238.0px;top:2306.7px;font-size:24px;line-height:24px;color:#cccccc;font-family:'Liberation Sans', sans-serif;font-weight:normal;letter-spacing:0.41px;">Run Testcases</div>
<svg class="s" style="left:433px;top:2305px;" width="28" height="28" viewBox="0 0 28 28"><circle cx="13" cy="13" r="11" stroke="#cccccc" stroke-width="2.2" fill="none"/><path d="M8.5 8.5 L17.5 17.5 M17.5 8.5 L8.5 17.5" stroke="#cccccc" stroke-width="2.2"/></svg>
<div class="t" style="left:468.0px;top:2306.7px;font-size:24px;line-height:24px;color:#cccccc;font-family:'Liberation Sans', sans-serif;font-weight:normal;">0</div>
<svg class="s" style="left:490px;top:2304px;" width="28" height="28" viewBox="0 0 28 28"><path d="M13 3 L25 24 H1 Z" stroke="#cccccc" stroke-width="2.2" fill="none" stroke-linejoin="round"/><path d="M13 10 V17 M13 19.5 V21.5" stroke="#cccccc" stroke-width="2.2"/></svg>
<div class="t" style="left:525.0px;top:2306.7px;font-size:24px;line-height:24px;color:#cccccc;font-family:'Liberation Sans', sans-serif;font-weight:normal;">0</div>
<div class="t" style="left:572.7px;top:2306.7px;font-size:24px;line-height:24px;color:#cccccc;font-family:'Liberation Sans', sans-serif;font-weight:normal;letter-spacing:0.7px;">-- INSERT --</div>
<div class="t" style="left:1871.6px;top:2306.7px;font-size:24px;line-height:24px;color:#cccccc;font-family:'Liberation Sans', sans-serif;font-weight:normal;letter-spacing:0.58px;">Ln 43, Col 4</div>
<div class="t" style="left:2042.0px;top:2306.7px;font-size:24px;line-height:24px;color:#cccccc;font-family:'Liberation Sans', sans-serif;font-weight:normal;letter-spacing:0.6px;">Spaces: 2</div>
<div class="t" style="left:2185.0px;top:2306.7px;font-size:24px;line-height:24px;color:#cccccc;font-family:'Liberation Sans', sans-serif;font-weight:normal;letter-spacing:0.6px;">UTF-8</div>
<div class="t" style="left:2290.7px;top:2306.7px;font-size:24px;line-height:24px;color:#cccccc;font-family:'Liberation Sans', sans-serif;font-weight:normal;letter-spacing:0.6px;">LF</div>
<div class="t" style="left:2348.5px;top:2308.4px;font-size:22px;line-height:22px;color:#cccccc;font-family:'Liberation Sans', sans-serif;font-weight:normal;letter-spacing:0px;">{ }</div>
<div class="t" style="left:2386.0px;top:2306.7px;font-size:24px;line-height:24px;color:#cccccc;font-family:'Liberation Sans', sans-serif;font-weight:normal;letter-spacing:0.76px;">TypeScript</div>
<svg class="s" style="left:2535px;top:2305px;" width="36" height="32" viewBox="0 0 36 32"><g transform="scale(0.88)"><path d="M4 6 C4 2 7 1 10.5 1 C14 1 16 2.5 17 4 C18 2.5 20 1 23.5 1 C27 1 30 2 30 6 L30 11 C32.5 13 33 16 33 19 C33 25 26 29 17 29 C8 29 1 25 1 19 C1 16 1.5 13 4 11 Z" fill="#cccccc"/><ellipse cx="10.4" cy="7.8" rx="4.6" ry="4.3" fill="#181818"/><ellipse cx="23.6" cy="7.8" rx="4.6" ry="4.3" fill="#181818"/><path d="M7 15.5 C7 14 10 13.8 17 13.8 C24 13.8 27 14 27 15.5 L27 22 C27 24.5 23 26 17 26 C11 26 7 24.5 7 22 Z" fill="#181818"/><rect x="12.2" y="17" width="2.5" height="6" rx="1.25" fill="#cccccc"/><rect x="19.3" y="17" width="2.5" height="6" rx="1.25" fill="#cccccc"/></g></svg>
<svg class="s" style="left:2596px;top:2302px;" width="32" height="34" viewBox="0 0 32 34"><path d="M4 25 H24 L21.5 21 V14 C21.5 9 18 5.5 13.5 5.5 C9 5.5 5.5 9 5.5 14 V21 Z" stroke="#cccccc" stroke-width="2.2" fill="none" stroke-linejoin="round"/><path d="M10 27 C10.5 30 16.5 30 17 27" stroke="#cccccc" stroke-width="2.2" fill="#cccccc"/><circle cx="22.5" cy="6.5" r="5" fill="#cccccc"/></svg>
</div></div><div id="frame"></div></body></html>
